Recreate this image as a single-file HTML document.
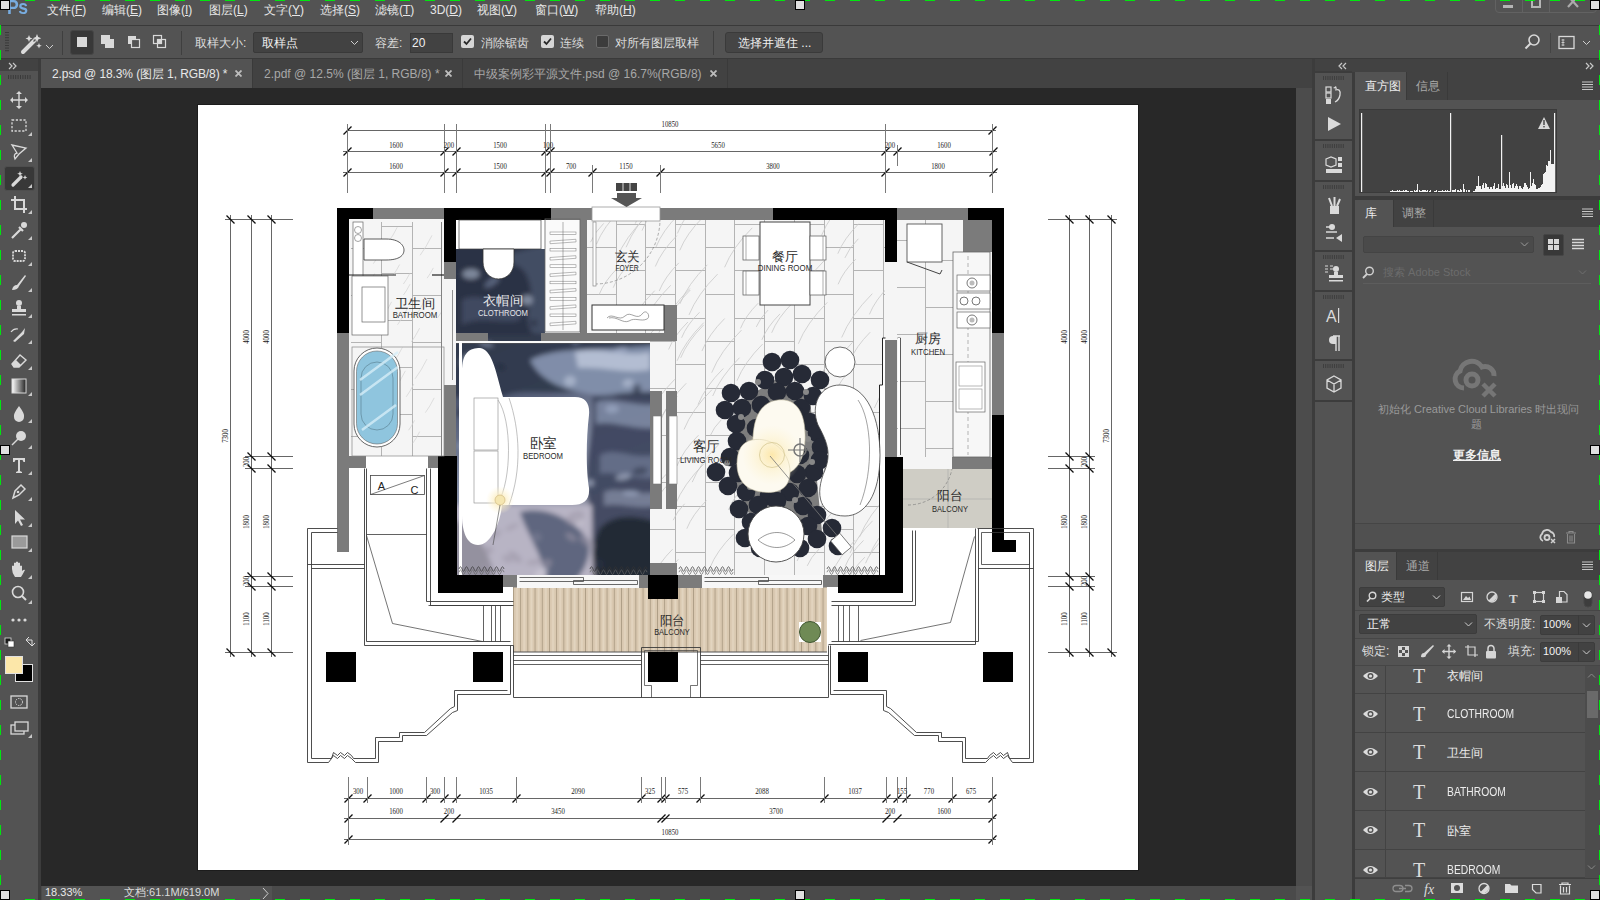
<!DOCTYPE html>
<html><head><meta charset="utf-8">
<style>
*{box-sizing:border-box;margin:0;padding:0}
html,body{width:1600px;height:900px;overflow:hidden;background:#535353;font-family:"Liberation Sans",sans-serif;color:#e8e8e8;font-size:12px}
.a{position:absolute}
.t{position:absolute;white-space:nowrap;line-height:1}
.menu .t{top:4px;font-size:12px;color:#e6e6e6}
.ti{fill:#dcdcdc}
</style></head><body>
<!-- menu bar -->
<div class="a" style="left:0;top:0;width:1600px;height:25px;background:#535353"></div>
<div class="a" style="left:0;top:25px;width:1600px;height:1px;background:#3a3a3a"></div>
<div class="t" style="left:7px;top:-4px;font-size:21px;font-weight:bold;color:#78acdf;letter-spacing:-0.5px;transform:scaleX(0.84);transform-origin:0 0">Ps</div>
<div class="menu">
<div class="t" style="left:47px">文件(<u>F</u>)</div>
<div class="t" style="left:102px">编辑(<u>E</u>)</div>
<div class="t" style="left:157px">图像(<u>I</u>)</div>
<div class="t" style="left:209px">图层(<u>L</u>)</div>
<div class="t" style="left:264px">文字(<u>Y</u>)</div>
<div class="t" style="left:320px">选择(<u>S</u>)</div>
<div class="t" style="left:375px">滤镜(<u>T</u>)</div>
<div class="t" style="left:430px">3D(<u>D</u>)</div>
<div class="t" style="left:477px">视图(<u>V</u>)</div>
<div class="t" style="left:535px">窗口(<u>W</u>)</div>
<div class="t" style="left:595px">帮助(<u>H</u>)</div>
</div>
<!-- window controls -->
<div class="a" style="left:1495px;top:-6px;width:102px;height:19px;border:1px solid #626262;border-radius:4px"></div>
<div class="a" style="left:1522px;top:0;width:1px;height:12px;background:#626262"></div>
<div class="a" style="left:1549px;top:0;width:1px;height:12px;background:#626262"></div>
<div class="a" style="left:1503px;top:5px;width:10px;height:3px;background:#b5b5b5"></div>
<div class="a" style="left:1531px;top:-3px;width:10px;height:11px;border:2px solid #b5b5b5"></div>
<svg class="a" style="left:1567px;top:-4px" width="12" height="12"><path d="M1,0 L11,11 M11,0 L1,11" stroke="#aaaaaa" stroke-width="2.2"/></svg>

<!-- options bar -->
<div class="a" style="left:0;top:58px;width:1600px;height:1px;background:#3a3a3a"></div>


<!-- left toolbar -->
<div class="a" style="left:0;top:59px;width:38px;height:841px;background:#535353"></div>
<div class="a" style="left:0;top:59px;width:38px;height:12px;background:#424242"></div>
<div class="a" style="left:38px;top:59px;width:3px;height:841px;background:#3c3c3c"></div>

<!-- tab bar -->
<div class="a" style="left:41px;top:59px;width:1271px;height:29px;background:#424242"></div>
<div class="a" style="left:41px;top:59px;width:211px;height:29px;background:#535353"></div>
<div class="a" style="left:252px;top:59px;width:1px;height:29px;background:#3a3a3a"></div>
<div class="a" style="left:462px;top:59px;width:1px;height:29px;background:#3a3a3a"></div>
<div class="a" style="left:727px;top:59px;width:1px;height:29px;background:#3a3a3a"></div>
<div class="t" style="left:52px;top:68px;font-size:12px;color:#e8e8e8;letter-spacing:-0.1px">2.psd @ 18.3% (图层 1, RGB/8) *</div>
<svg class="a" style="left:235px;top:70px" width="7" height="7"><path d="M0.5,0.5 L6.5,6.5 M6.5,0.5 L0.5,6.5" stroke="#bdbdbd" stroke-width="1.8"/></svg>
<div class="t" style="left:264px;top:68px;font-size:12px;color:#a8a8a8">2.pdf @ 12.5% (图层 1, RGB/8) *</div>
<svg class="a" style="left:445px;top:70px" width="7" height="7"><path d="M0.5,0.5 L6.5,6.5 M6.5,0.5 L0.5,6.5" stroke="#bdbdbd" stroke-width="1.8"/></svg>
<div class="t" style="left:474px;top:68px;font-size:12px;color:#a8a8a8">中级案例彩平源文件.psd @ 16.7%(RGB/8)</div>
<svg class="a" style="left:710px;top:70px" width="7" height="7"><path d="M0.5,0.5 L6.5,6.5 M6.5,0.5 L0.5,6.5" stroke="#bdbdbd" stroke-width="1.8"/></svg>

<!-- canvas bg -->
<div class="a" style="left:41px;top:88px;width:1255px;height:798px;background:#282828"></div>
<!-- vertical scrollbar -->
<div class="a" style="left:1296px;top:88px;width:16px;height:798px;background:#4c4c4c"></div>
<div class="a" style="left:1312px;top:59px;width:3px;height:841px;background:#3c3c3c"></div>
<!-- status bar -->
<div class="a" style="left:41px;top:886px;width:1255px;height:14px;background:#4a4a4a"></div>
<div class="a" style="left:1296px;top:886px;width:16px;height:14px;background:#535353"></div>
<div class="a" style="left:42px;top:886px;width:47px;height:14px;background:#535353"></div>
<div class="a" style="left:89px;top:886px;width:183px;height:14px;background:#535353"></div>
<div class="t" style="left:45px;top:887px;font-size:11px;color:#e8e8e8">18.33%</div>
<div class="t" style="left:124px;top:887px;font-size:11px;color:#dcdcdc">文档:61.1M/619.0M</div>
<svg class="a" style="left:262px;top:887px" width="8" height="13"><path d="M1 1 L6 6.5 L1 12" stroke="#cfcfcf" fill="none" stroke-width="1"/></svg>

<!-- document -->
<div class="a" style="left:197px;top:104px;width:942px;height:767px;background:#1c1c1c"></div>
<div class="a" style="left:198px;top:105px;width:940px;height:765px;background:#fff"></div>
<svg class="a" style="left:198px;top:105px" width="940" height="765" viewBox="198 105 940 765" font-family="Liberation Sans, sans-serif">
<defs>
<pattern id="wood" x="513" y="0" width="7.2" height="20" patternUnits="userSpaceOnUse">
<rect width="7.2" height="20" fill="#d9c8b0"/><rect x="0" width="0.8" height="20" fill="#a89880"/><rect x="3" width="2" height="20" fill="#e3d5c0"/></pattern>
<linearGradient id="cg" x1="0" y1="0" x2="0.3" y2="1">
<stop offset="0" stop-color="#2e3446"/><stop offset="0.35" stop-color="#59627c"/><stop offset="0.6" stop-color="#8891a8"/><stop offset="1" stop-color="#9e9aa8"/></linearGradient>
<radialGradient id="lamp" cx="0.5" cy="0.5" r="0.5"><stop offset="0" stop-color="#fde39a" stop-opacity="0.95"/><stop offset="0.5" stop-color="#fcefc4" stop-opacity="0.6"/><stop offset="1" stop-color="#fff4d0" stop-opacity="0"/></radialGradient>
<radialGradient id="ctab" cx="0.45" cy="0.7" r="0.7"><stop offset="0" stop-color="#fbe9b5"/><stop offset="1" stop-color="#fdfaf0"/></radialGradient>
<clipPath id="lclip"><rect x="587" y="220" width="298" height="355"/><rect x="349" y="220" width="95" height="236"/></clipPath>
<clipPath id="cclip"><rect x="456" y="249" width="89" height="84"/><rect x="456" y="333" width="194" height="242"/></clipPath>
<filter id="cblur" x="-5%" y="-5%" width="110%" height="110%"><feGaussianBlur stdDeviation="2.8"/></filter>
</defs>
<rect x="349" y="219" width="95" height="237" fill="#f5f5f5" />
<rect x="587" y="219" width="299" height="356" fill="#f5f5f5" />
<rect x="650" y="341" width="27" height="234" fill="#f5f5f5" />
<rect x="897" y="219" width="95" height="238" fill="#f5f5f5" />
<rect x="953" y="252" width="39" height="205" fill="#f7f7f7" />
<rect x="885" y="262" width="12" height="78" fill="#f5f5f5" />
<rect x="545" y="219" width="35" height="113" fill="#fafafa" />
<rect x="586" y="247" width="30" height="1" fill="#b4b4b4"/>
<rect x="586" y="294" width="30" height="1" fill="#b4b4b4"/>
<rect x="586" y="341" width="30" height="1" fill="#b4b4b4"/>
<rect x="586" y="388" width="30" height="1" fill="#b4b4b4"/>
<rect x="586" y="435" width="30" height="1" fill="#b4b4b4"/>
<rect x="586" y="482" width="30" height="1" fill="#b4b4b4"/>
<rect x="586" y="529" width="30" height="1" fill="#b4b4b4"/>
<rect x="616" y="220" width="1" height="355" fill="#b4b4b4"/>
<rect x="616" y="224" width="29" height="1" fill="#b4b4b4"/>
<rect x="616" y="270" width="29" height="1" fill="#b4b4b4"/>
<rect x="616" y="318" width="29" height="1" fill="#b4b4b4"/>
<rect x="616" y="364" width="29" height="1" fill="#b4b4b4"/>
<rect x="616" y="412" width="29" height="1" fill="#b4b4b4"/>
<rect x="616" y="458" width="29" height="1" fill="#b4b4b4"/>
<rect x="616" y="506" width="29" height="1" fill="#b4b4b4"/>
<rect x="616" y="552" width="29" height="1" fill="#b4b4b4"/>
<rect x="645" y="220" width="1" height="355" fill="#b4b4b4"/>
<rect x="645" y="247" width="30" height="1" fill="#b4b4b4"/>
<rect x="645" y="294" width="30" height="1" fill="#b4b4b4"/>
<rect x="645" y="341" width="30" height="1" fill="#b4b4b4"/>
<rect x="645" y="388" width="30" height="1" fill="#b4b4b4"/>
<rect x="645" y="435" width="30" height="1" fill="#b4b4b4"/>
<rect x="645" y="482" width="30" height="1" fill="#b4b4b4"/>
<rect x="645" y="529" width="30" height="1" fill="#b4b4b4"/>
<rect x="675" y="220" width="1" height="355" fill="#b4b4b4"/>
<rect x="675" y="224" width="30" height="1" fill="#b4b4b4"/>
<rect x="675" y="270" width="30" height="1" fill="#b4b4b4"/>
<rect x="675" y="318" width="30" height="1" fill="#b4b4b4"/>
<rect x="675" y="364" width="30" height="1" fill="#b4b4b4"/>
<rect x="675" y="412" width="30" height="1" fill="#b4b4b4"/>
<rect x="675" y="458" width="30" height="1" fill="#b4b4b4"/>
<rect x="675" y="506" width="30" height="1" fill="#b4b4b4"/>
<rect x="675" y="552" width="30" height="1" fill="#b4b4b4"/>
<rect x="705" y="220" width="1" height="355" fill="#b4b4b4"/>
<rect x="705" y="247" width="29" height="1" fill="#b4b4b4"/>
<rect x="705" y="294" width="29" height="1" fill="#b4b4b4"/>
<rect x="705" y="341" width="29" height="1" fill="#b4b4b4"/>
<rect x="705" y="388" width="29" height="1" fill="#b4b4b4"/>
<rect x="705" y="435" width="29" height="1" fill="#b4b4b4"/>
<rect x="705" y="482" width="29" height="1" fill="#b4b4b4"/>
<rect x="705" y="529" width="29" height="1" fill="#b4b4b4"/>
<rect x="734" y="220" width="1" height="355" fill="#b4b4b4"/>
<rect x="734" y="224" width="30" height="1" fill="#b4b4b4"/>
<rect x="734" y="270" width="30" height="1" fill="#b4b4b4"/>
<rect x="734" y="318" width="30" height="1" fill="#b4b4b4"/>
<rect x="734" y="364" width="30" height="1" fill="#b4b4b4"/>
<rect x="734" y="412" width="30" height="1" fill="#b4b4b4"/>
<rect x="734" y="458" width="30" height="1" fill="#b4b4b4"/>
<rect x="734" y="506" width="30" height="1" fill="#b4b4b4"/>
<rect x="734" y="552" width="30" height="1" fill="#b4b4b4"/>
<rect x="764" y="220" width="1" height="355" fill="#b4b4b4"/>
<rect x="764" y="247" width="30" height="1" fill="#b4b4b4"/>
<rect x="764" y="294" width="30" height="1" fill="#b4b4b4"/>
<rect x="764" y="341" width="30" height="1" fill="#b4b4b4"/>
<rect x="764" y="388" width="30" height="1" fill="#b4b4b4"/>
<rect x="764" y="435" width="30" height="1" fill="#b4b4b4"/>
<rect x="764" y="482" width="30" height="1" fill="#b4b4b4"/>
<rect x="764" y="529" width="30" height="1" fill="#b4b4b4"/>
<rect x="794" y="220" width="1" height="355" fill="#b4b4b4"/>
<rect x="794" y="224" width="30" height="1" fill="#b4b4b4"/>
<rect x="794" y="270" width="30" height="1" fill="#b4b4b4"/>
<rect x="794" y="318" width="30" height="1" fill="#b4b4b4"/>
<rect x="794" y="364" width="30" height="1" fill="#b4b4b4"/>
<rect x="794" y="412" width="30" height="1" fill="#b4b4b4"/>
<rect x="794" y="458" width="30" height="1" fill="#b4b4b4"/>
<rect x="794" y="506" width="30" height="1" fill="#b4b4b4"/>
<rect x="794" y="552" width="30" height="1" fill="#b4b4b4"/>
<rect x="824" y="220" width="1" height="355" fill="#b4b4b4"/>
<rect x="824" y="247" width="29" height="1" fill="#b4b4b4"/>
<rect x="824" y="294" width="29" height="1" fill="#b4b4b4"/>
<rect x="824" y="341" width="29" height="1" fill="#b4b4b4"/>
<rect x="824" y="388" width="29" height="1" fill="#b4b4b4"/>
<rect x="824" y="435" width="29" height="1" fill="#b4b4b4"/>
<rect x="824" y="482" width="29" height="1" fill="#b4b4b4"/>
<rect x="824" y="529" width="29" height="1" fill="#b4b4b4"/>
<rect x="853" y="220" width="1" height="355" fill="#b4b4b4"/>
<rect x="853" y="224" width="30" height="1" fill="#b4b4b4"/>
<rect x="853" y="270" width="30" height="1" fill="#b4b4b4"/>
<rect x="853" y="318" width="30" height="1" fill="#b4b4b4"/>
<rect x="853" y="364" width="30" height="1" fill="#b4b4b4"/>
<rect x="853" y="412" width="30" height="1" fill="#b4b4b4"/>
<rect x="853" y="458" width="30" height="1" fill="#b4b4b4"/>
<rect x="853" y="506" width="30" height="1" fill="#b4b4b4"/>
<rect x="853" y="552" width="30" height="1" fill="#b4b4b4"/>
<rect x="883" y="220" width="1" height="355" fill="#b4b4b4"/>
<rect x="883" y="247" width="2" height="1" fill="#b4b4b4"/>
<rect x="883" y="294" width="2" height="1" fill="#b4b4b4"/>
<rect x="883" y="341" width="2" height="1" fill="#b4b4b4"/>
<rect x="883" y="388" width="2" height="1" fill="#b4b4b4"/>
<rect x="883" y="435" width="2" height="1" fill="#b4b4b4"/>
<rect x="883" y="482" width="2" height="1" fill="#b4b4b4"/>
<rect x="883" y="529" width="2" height="1" fill="#b4b4b4"/>
<rect x="351" y="248" width="30" height="1" fill="#b4b4b4"/>
<rect x="351" y="295" width="30" height="1" fill="#b4b4b4"/>
<rect x="351" y="342" width="30" height="1" fill="#b4b4b4"/>
<rect x="351" y="389" width="30" height="1" fill="#b4b4b4"/>
<rect x="351" y="436" width="30" height="1" fill="#b4b4b4"/>
<rect x="381" y="222" width="1" height="234" fill="#b4b4b4"/>
<rect x="381" y="226" width="31" height="1" fill="#b4b4b4"/>
<rect x="381" y="273" width="31" height="1" fill="#b4b4b4"/>
<rect x="381" y="320" width="31" height="1" fill="#b4b4b4"/>
<rect x="381" y="367" width="31" height="1" fill="#b4b4b4"/>
<rect x="381" y="414" width="31" height="1" fill="#b4b4b4"/>
<rect x="412" y="222" width="1" height="234" fill="#b4b4b4"/>
<rect x="412" y="248" width="29" height="1" fill="#b4b4b4"/>
<rect x="412" y="295" width="29" height="1" fill="#b4b4b4"/>
<rect x="412" y="342" width="29" height="1" fill="#b4b4b4"/>
<rect x="412" y="389" width="29" height="1" fill="#b4b4b4"/>
<rect x="412" y="436" width="29" height="1" fill="#b4b4b4"/>
<rect x="897" y="240" width="28" height="1" fill="#b4b4b4"/>
<rect x="897" y="287" width="28" height="1" fill="#b4b4b4"/>
<rect x="897" y="334" width="28" height="1" fill="#b4b4b4"/>
<rect x="897" y="381" width="28" height="1" fill="#b4b4b4"/>
<rect x="897" y="428" width="28" height="1" fill="#b4b4b4"/>
<rect x="925" y="220" width="1" height="237" fill="#b4b4b4"/>
<rect x="925" y="260" width="28" height="1" fill="#b4b4b4"/>
<rect x="925" y="307" width="28" height="1" fill="#b4b4b4"/>
<rect x="925" y="354" width="28" height="1" fill="#b4b4b4"/>
<rect x="925" y="401" width="28" height="1" fill="#b4b4b4"/>
<rect x="925" y="448" width="28" height="1" fill="#b4b4b4"/>
<rect x="953" y="240" width="0" height="1" fill="#b4b4b4"/>
<rect x="953" y="287" width="0" height="1" fill="#b4b4b4"/>
<rect x="953" y="334" width="0" height="1" fill="#b4b4b4"/>
<rect x="953" y="381" width="0" height="1" fill="#b4b4b4"/>
<rect x="953" y="428" width="0" height="1" fill="#b4b4b4"/>
<g clip-path="url(#lclip)">
<path d="M659.0,422.3 q5.2,-13.0 18.3,-26.1" stroke="#c9c9c9" stroke-width="0.8" fill="none"/>
<path d="M765.1,452.3 q3.4,-8.5 11.9,-17.0" stroke="#c9c9c9" stroke-width="0.8" fill="none"/>
<path d="M593.8,530.2 q4.6,-11.4 15.9,-22.8" stroke="#c9c9c9" stroke-width="0.8" fill="none"/>
<path d="M658.0,588.4 q5.8,-14.6 20.4,-29.1" stroke="#c9c9c9" stroke-width="0.8" fill="none"/>
<path d="M832.6,397.3 q6.8,-17.1 23.9,-34.2" stroke="#c9c9c9" stroke-width="0.8" fill="none"/>
<path d="M633.7,455.6 q8.2,-20.5 28.7,-41.0" stroke="#c9c9c9" stroke-width="0.8" fill="none"/>
<path d="M741.7,494.8 q7.0,-17.6 24.6,-35.1" stroke="#c9c9c9" stroke-width="0.8" fill="none"/>
<path d="M608.6,501.0 q6.5,-16.4 22.9,-32.7" stroke="#c9c9c9" stroke-width="0.8" fill="none"/>
<path d="M677.4,233.4 q8.2,-20.5 28.7,-41.0" stroke="#c9c9c9" stroke-width="0.8" fill="none"/>
<path d="M727.1,486.5 q8.3,-20.7 29.0,-41.4" stroke="#c9c9c9" stroke-width="0.8" fill="none"/>
<path d="M797.1,561.0 q5.4,-13.4 18.8,-26.8" stroke="#c9c9c9" stroke-width="0.8" fill="none"/>
<path d="M822.3,385.6 q8.6,-21.5 30.1,-43.1" stroke="#c9c9c9" stroke-width="0.8" fill="none"/>
<path d="M844.9,257.9 q3.8,-9.5 13.4,-19.1" stroke="#c9c9c9" stroke-width="0.8" fill="none"/>
<path d="M652.9,577.3 q5.6,-14.0 19.7,-28.1" stroke="#c9c9c9" stroke-width="0.8" fill="none"/>
<path d="M771.7,332.8 q6.0,-15.1 21.2,-30.2" stroke="#c9c9c9" stroke-width="0.8" fill="none"/>
<path d="M701.9,351.1 q6.5,-16.3 22.8,-32.6" stroke="#c9c9c9" stroke-width="0.8" fill="none"/>
<path d="M759.4,554.7 q7.1,-17.7 24.8,-35.5" stroke="#c9c9c9" stroke-width="0.8" fill="none"/>
<path d="M859.4,537.2 q8.9,-22.4 31.3,-44.7" stroke="#c9c9c9" stroke-width="0.8" fill="none"/>
<path d="M784.7,282.0 q8.2,-20.4 28.6,-40.8" stroke="#c9c9c9" stroke-width="0.8" fill="none"/>
<path d="M869.7,554.9 q6.4,-16.0 22.5,-32.1" stroke="#c9c9c9" stroke-width="0.8" fill="none"/>
<path d="M797.0,299.7 q8.0,-20.0 28.0,-39.9" stroke="#c9c9c9" stroke-width="0.8" fill="none"/>
<path d="M756.3,326.9 q3.4,-8.5 11.8,-16.9" stroke="#c9c9c9" stroke-width="0.8" fill="none"/>
<path d="M837.6,586.2 q3.5,-8.8 12.4,-17.7" stroke="#c9c9c9" stroke-width="0.8" fill="none"/>
<path d="M822.2,373.0 q3.9,-9.8 13.7,-19.5" stroke="#c9c9c9" stroke-width="0.8" fill="none"/>
<path d="M675.2,504.9 q8.2,-20.6 28.8,-41.2" stroke="#c9c9c9" stroke-width="0.8" fill="none"/>
<path d="M602.8,448.1 q3.3,-8.2 11.4,-16.3" stroke="#c9c9c9" stroke-width="0.8" fill="none"/>
<path d="M798.3,343.8 q8.3,-20.7 29.0,-41.4" stroke="#c9c9c9" stroke-width="0.8" fill="none"/>
<path d="M874.4,408.0 q9.0,-22.5 31.5,-45.0" stroke="#c9c9c9" stroke-width="0.8" fill="none"/>
<path d="M679.8,250.3 q6.6,-16.5 23.1,-33.0" stroke="#c9c9c9" stroke-width="0.8" fill="none"/>
<path d="M599.1,294.6 q5.4,-13.6 19.1,-27.2" stroke="#c9c9c9" stroke-width="0.8" fill="none"/>
<path d="M767.0,279.5 q3.3,-8.1 11.4,-16.3" stroke="#c9c9c9" stroke-width="0.8" fill="none"/>
<path d="M841.7,337.5 q8.8,-21.9 30.6,-43.8" stroke="#c9c9c9" stroke-width="0.8" fill="none"/>
<path d="M850.0,361.0 q5.8,-14.4 20.2,-28.8" stroke="#c9c9c9" stroke-width="0.8" fill="none"/>
<path d="M740.8,459.0 q6.6,-16.4 23.0,-32.9" stroke="#c9c9c9" stroke-width="0.8" fill="none"/>
<path d="M752.2,450.2 q8.6,-21.6 30.3,-43.2" stroke="#c9c9c9" stroke-width="0.8" fill="none"/>
<path d="M737.0,380.7 q7.3,-18.3 25.6,-36.6" stroke="#c9c9c9" stroke-width="0.8" fill="none"/>
<path d="M658.9,332.8 q8.9,-22.2 31.0,-44.3" stroke="#c9c9c9" stroke-width="0.8" fill="none"/>
<path d="M741.1,423.8 q3.1,-7.7 10.7,-15.3" stroke="#c9c9c9" stroke-width="0.8" fill="none"/>
<path d="M710.4,435.4 q3.1,-7.8 10.9,-15.6" stroke="#c9c9c9" stroke-width="0.8" fill="none"/>
<path d="M768.6,454.6 q3.4,-8.4 11.8,-16.8" stroke="#c9c9c9" stroke-width="0.8" fill="none"/>
<path d="M771.9,393.6 q7.1,-17.7 24.8,-35.4" stroke="#c9c9c9" stroke-width="0.8" fill="none"/>
<path d="M692.2,482.2 q7.4,-18.6 26.0,-37.1" stroke="#c9c9c9" stroke-width="0.8" fill="none"/>
<path d="M596.4,244.3 q7.1,-17.6 24.7,-35.3" stroke="#c9c9c9" stroke-width="0.8" fill="none"/>
<path d="M869.4,314.4 q5.7,-14.3 20.1,-28.7" stroke="#c9c9c9" stroke-width="0.8" fill="none"/>
<path d="M761.9,339.8 q5.2,-13.0 18.1,-25.9" stroke="#c9c9c9" stroke-width="0.8" fill="none"/>
<path d="M680.7,357.8 q6.6,-16.4 23.0,-32.9" stroke="#c9c9c9" stroke-width="0.8" fill="none"/>
<path d="M677.1,360.8 q7.6,-19.1 26.7,-38.2" stroke="#c9c9c9" stroke-width="0.8" fill="none"/>
<path d="M597.8,431.5 q7.4,-18.5 25.9,-37.1" stroke="#c9c9c9" stroke-width="0.8" fill="none"/>
<path d="M679.9,303.9 q7.8,-19.6 27.4,-39.1" stroke="#c9c9c9" stroke-width="0.8" fill="none"/>
<path d="M659.2,291.0 q5.6,-14.0 19.6,-28.1" stroke="#c9c9c9" stroke-width="0.8" fill="none"/>
<path d="M792.4,259.5 q4.9,-12.3 17.3,-24.7" stroke="#c9c9c9" stroke-width="0.8" fill="none"/>
<path d="M686.8,528.7 q5.6,-14.1 19.7,-28.2" stroke="#c9c9c9" stroke-width="0.8" fill="none"/>
<path d="M838.1,284.3 q5.0,-12.6 17.6,-25.1" stroke="#c9c9c9" stroke-width="0.8" fill="none"/>
<path d="M778.6,547.6 q5.7,-14.3 20.0,-28.5" stroke="#c9c9c9" stroke-width="0.8" fill="none"/>
<path d="M655.3,266.5 q6.2,-15.4 21.6,-30.9" stroke="#c9c9c9" stroke-width="0.8" fill="none"/>
<path d="M645.3,518.9 q8.0,-20.1 28.1,-40.2" stroke="#c9c9c9" stroke-width="0.8" fill="none"/>
<path d="M643.2,324.5 q7.8,-19.6 27.5,-39.2" stroke="#c9c9c9" stroke-width="0.8" fill="none"/>
<path d="M776.2,518.7 q5.1,-12.7 17.8,-25.4" stroke="#c9c9c9" stroke-width="0.8" fill="none"/>
<path d="M627.6,329.4 q7.8,-19.4 27.2,-38.8" stroke="#c9c9c9" stroke-width="0.8" fill="none"/>
<path d="M668.6,349.5 q5.5,-13.8 19.3,-27.5" stroke="#c9c9c9" stroke-width="0.8" fill="none"/>
<path d="M711.7,372.7 q8.5,-21.3 29.8,-42.6" stroke="#c9c9c9" stroke-width="0.8" fill="none"/>
<path d="M635.2,223.7 q8.7,-21.6 30.3,-43.3" stroke="#c9c9c9" stroke-width="0.8" fill="none"/>
<path d="M845.2,585.2 q5.6,-14.0 19.6,-28.0" stroke="#c9c9c9" stroke-width="0.8" fill="none"/>
<path d="M865.5,563.3 q4.3,-10.8 15.2,-21.7" stroke="#c9c9c9" stroke-width="0.8" fill="none"/>
<path d="M806.2,529.9 q7.0,-17.4 24.4,-34.9" stroke="#c9c9c9" stroke-width="0.8" fill="none"/>
<path d="M740.5,328.4 q5.0,-12.6 17.7,-25.2" stroke="#c9c9c9" stroke-width="0.8" fill="none"/>
<path d="M656.0,247.0 q6.5,-16.3 22.9,-32.7" stroke="#c9c9c9" stroke-width="0.8" fill="none"/>
<path d="M673.2,520.2 q3.3,-8.2 11.4,-16.4" stroke="#c9c9c9" stroke-width="0.8" fill="none"/>
<path d="M852.0,477.3 q8.5,-21.4 29.9,-42.7" stroke="#c9c9c9" stroke-width="0.8" fill="none"/>
<path d="M850.0,553.1 q6.5,-16.2 22.6,-32.3" stroke="#c9c9c9" stroke-width="0.8" fill="none"/>
<path d="M593.8,496.3 q4.0,-10.1 14.1,-20.2" stroke="#c9c9c9" stroke-width="0.8" fill="none"/>
<path d="M677.0,465.9 q6.1,-15.4 21.5,-30.7" stroke="#c9c9c9" stroke-width="0.8" fill="none"/>
<path d="M710.0,567.6 q6.7,-16.7 23.4,-33.4" stroke="#c9c9c9" stroke-width="0.8" fill="none"/>
<path d="M689.0,314.9 q8.2,-20.4 28.6,-40.8" stroke="#c9c9c9" stroke-width="0.8" fill="none"/>
<path d="M728.4,509.9 q5.1,-12.8 17.9,-25.6" stroke="#c9c9c9" stroke-width="0.8" fill="none"/>
<path d="M647.2,418.7 q7.9,-19.8 27.7,-39.5" stroke="#c9c9c9" stroke-width="0.8" fill="none"/>
<path d="M639.7,513.3 q8.5,-21.3 29.9,-42.7" stroke="#c9c9c9" stroke-width="0.8" fill="none"/>
<path d="M823.8,525.0 q3.0,-7.6 10.7,-15.2" stroke="#c9c9c9" stroke-width="0.8" fill="none"/>
<path d="M772.3,539.4 q3.3,-8.2 11.5,-16.5" stroke="#c9c9c9" stroke-width="0.8" fill="none"/>
<path d="M668.7,320.8 q6.2,-15.4 21.6,-30.8" stroke="#c9c9c9" stroke-width="0.8" fill="none"/>
<path d="M712.7,396.0 q7.7,-19.1 26.8,-38.3" stroke="#c9c9c9" stroke-width="0.8" fill="none"/>
<path d="M590.5,242.2 q3.8,-9.4 13.2,-18.8" stroke="#c9c9c9" stroke-width="0.8" fill="none"/>
<path d="M626.1,247.2 q8.8,-22.1 31.0,-44.2" stroke="#c9c9c9" stroke-width="0.8" fill="none"/>
<path d="M837.8,253.7 q6.0,-15.0 21.0,-30.1" stroke="#c9c9c9" stroke-width="0.8" fill="none"/>
<path d="M681.6,337.8 q5.1,-12.8 17.9,-25.5" stroke="#c9c9c9" stroke-width="0.8" fill="none"/>
<path d="M777.6,437.9 q5.2,-12.9 18.1,-25.8" stroke="#c9c9c9" stroke-width="0.8" fill="none"/>
<path d="M645.4,343.0 q3.7,-9.4 13.1,-18.7" stroke="#c9c9c9" stroke-width="0.8" fill="none"/>
<path d="M751.1,485.5 q5.3,-13.2 18.5,-26.4" stroke="#c9c9c9" stroke-width="0.8" fill="none"/>
<path d="M613.2,287.7 q5.2,-13.1 18.3,-26.2" stroke="#c9c9c9" stroke-width="0.8" fill="none"/>
<path d="M765.3,510.0 q5.3,-13.2 18.5,-26.4" stroke="#c9c9c9" stroke-width="0.8" fill="none"/>
<path d="M822.3,451.2 q5.6,-14.0 19.6,-27.9" stroke="#c9c9c9" stroke-width="0.8" fill="none"/>
<path d="M698.0,404.6 q7.2,-18.0 25.3,-36.1" stroke="#c9c9c9" stroke-width="0.8" fill="none"/>
<path d="M711.9,477.4 q5.8,-14.4 20.2,-28.8" stroke="#c9c9c9" stroke-width="0.8" fill="none"/>
<path d="M661.1,419.2 q7.2,-17.9 25.1,-35.9" stroke="#c9c9c9" stroke-width="0.8" fill="none"/>
<path d="M610.8,378.4 q5.6,-13.9 19.4,-27.8" stroke="#c9c9c9" stroke-width="0.8" fill="none"/>
<path d="M845.1,566.6 q5.2,-13.1 18.4,-26.2" stroke="#c9c9c9" stroke-width="0.8" fill="none"/>
<path d="M850.4,513.1 q4.6,-11.4 16.0,-22.9" stroke="#c9c9c9" stroke-width="0.8" fill="none"/>
<path d="M724.6,267.3 q7.9,-19.7 27.6,-39.4" stroke="#c9c9c9" stroke-width="0.8" fill="none"/>
<path d="M782.1,548.5 q7.8,-19.4 27.1,-38.8" stroke="#c9c9c9" stroke-width="0.8" fill="none"/>
<path d="M783.6,492.0 q6.4,-16.0 22.3,-31.9" stroke="#c9c9c9" stroke-width="0.8" fill="none"/>
<path d="M619.9,438.3 q3.0,-7.6 10.6,-15.1" stroke="#c9c9c9" stroke-width="0.8" fill="none"/>
<path d="M631.6,506.9 q3.3,-8.2 11.4,-16.3" stroke="#c9c9c9" stroke-width="0.8" fill="none"/>
<path d="M616.6,258.5 q8.3,-20.7 29.0,-41.4" stroke="#c9c9c9" stroke-width="0.8" fill="none"/>
<path d="M642.0,230.6 q8.0,-20.1 28.2,-40.2" stroke="#c9c9c9" stroke-width="0.8" fill="none"/>
<path d="M625.2,532.6 q7.0,-17.6 24.6,-35.2" stroke="#c9c9c9" stroke-width="0.8" fill="none"/>
<path d="M832.5,572.5 q6.5,-16.2 22.7,-32.4" stroke="#c9c9c9" stroke-width="0.8" fill="none"/>
<path d="M821.6,235.3 q7.6,-19.0 26.6,-38.0" stroke="#c9c9c9" stroke-width="0.8" fill="none"/>
<path d="M738.3,485.2 q3.6,-9.1 12.7,-18.2" stroke="#c9c9c9" stroke-width="0.8" fill="none"/>
<path d="M807.2,565.9 q3.4,-8.4 11.8,-16.8" stroke="#c9c9c9" stroke-width="0.8" fill="none"/>
<path d="M684.0,429.5 q8.0,-19.9 27.9,-39.8" stroke="#c9c9c9" stroke-width="0.8" fill="none"/>
<path d="M373.3,263.7 q3.3,-4.4 6.6,-11.0" stroke="#d2d2d2" stroke-width="0.7" fill="none"/>
<path d="M406.2,396.8 q3.8,-5.1 7.6,-12.7" stroke="#d2d2d2" stroke-width="0.7" fill="none"/>
<path d="M384.3,314.0 q3.7,-4.9 7.3,-12.2" stroke="#d2d2d2" stroke-width="0.7" fill="none"/>
<path d="M388.8,241.3 q4.2,-5.6 8.4,-14.0" stroke="#d2d2d2" stroke-width="0.7" fill="none"/>
<path d="M437.6,317.8 q5.1,-6.8 10.2,-17.0" stroke="#d2d2d2" stroke-width="0.7" fill="none"/>
<path d="M366.1,382.3 q5.1,-6.8 10.2,-17.1" stroke="#d2d2d2" stroke-width="0.7" fill="none"/>
<path d="M411.3,342.0 q4.1,-5.5 8.3,-13.8" stroke="#d2d2d2" stroke-width="0.7" fill="none"/>
<path d="M408.6,430.2 q2.9,-3.9 5.9,-9.8" stroke="#d2d2d2" stroke-width="0.7" fill="none"/>
<path d="M360.4,395.6 q5.7,-7.6 11.4,-19.0" stroke="#d2d2d2" stroke-width="0.7" fill="none"/>
<path d="M397.5,324.8 q5.0,-6.7 10.0,-16.6" stroke="#d2d2d2" stroke-width="0.7" fill="none"/>
<path d="M368.4,284.0 q3.1,-4.2 6.2,-10.4" stroke="#d2d2d2" stroke-width="0.7" fill="none"/>
<path d="M403.5,295.0 q3.2,-4.3 6.5,-10.8" stroke="#d2d2d2" stroke-width="0.7" fill="none"/>
<path d="M412.8,443.2 q3.5,-4.6 6.9,-11.6" stroke="#d2d2d2" stroke-width="0.7" fill="none"/>
<path d="M414.1,317.9 q5.5,-7.3 10.9,-18.2" stroke="#d2d2d2" stroke-width="0.7" fill="none"/>
<path d="M403.4,284.0 q3.2,-4.2 6.4,-10.6" stroke="#d2d2d2" stroke-width="0.7" fill="none"/>
<path d="M354.0,333.2 q3.8,-5.0 7.6,-12.6" stroke="#d2d2d2" stroke-width="0.7" fill="none"/>
<path d="M367.2,305.6 q3.6,-4.7 7.1,-11.9" stroke="#d2d2d2" stroke-width="0.7" fill="none"/>
<path d="M420.1,255.3 q6.0,-8.0 11.9,-19.9" stroke="#d2d2d2" stroke-width="0.7" fill="none"/>
<path d="M394.2,361.0 q4.1,-5.4 8.2,-13.6" stroke="#d2d2d2" stroke-width="0.7" fill="none"/>
<path d="M425.4,412.6 q4.4,-5.9 8.8,-14.7" stroke="#d2d2d2" stroke-width="0.7" fill="none"/>
<path d="M394.4,389.2 q5.5,-7.3 11.0,-18.3" stroke="#d2d2d2" stroke-width="0.7" fill="none"/>
<path d="M387.2,392.2 q5.9,-7.8 11.7,-19.5" stroke="#d2d2d2" stroke-width="0.7" fill="none"/>
<path d="M393.1,275.3 q3.2,-4.3 6.5,-10.8" stroke="#d2d2d2" stroke-width="0.7" fill="none"/>
<path d="M415.2,378.7 q5.9,-7.8 11.7,-19.5" stroke="#d2d2d2" stroke-width="0.7" fill="none"/>
<path d="M427.1,278.2 q3.1,-4.1 6.2,-10.3" stroke="#d2d2d2" stroke-width="0.7" fill="none"/>
</g>
<g clip-path="url(#cclip)"><g filter="url(#cblur)">
<rect x="450" y="243" width="101" height="97" fill="#2c3345" />
<rect x="450" y="333" width="206" height="248" fill="url(#cg)" />
<path d="M450,243 L551,243 L551,335 L450,335 Z" fill="#2c3345" opacity="1"/>
<path d="M505,255 C515,270 525,262 530,285 C534,300 522,315 532,333 L551,335 L551,243 Z" fill="#4a546c" opacity="0.8"/>
<path d="M462,300 C480,290 500,310 520,300 L520,320 C500,325 480,315 462,325 Z" fill="#56627d" opacity="0.5"/>
<path d="M450,335 L656,335 L656,400 C620,398 600,390 570,392 C540,395 520,388 503,397 L450,397 Z" fill="#323a4e" opacity="0.95"/>
<path d="M530,360 C560,345 600,352 656,345 L656,392 C630,390 605,398 580,392 C560,388 540,380 530,360 Z" fill="#8e9cb9" opacity="0.85"/>
<path d="M575,352 C600,346 625,358 650,352 L650,370 C625,374 600,366 578,368 Z" fill="#c9d2e4" opacity="0.7"/>
<path d="M592,396 L656,396 L656,581 L598,581 C586,545 598,520 588,500 C580,470 596,430 592,396 Z" fill="#3f475f" opacity="0.95"/>
<path d="M596,402 C615,396 636,408 656,404 L656,428 C632,430 612,420 596,424 Z" fill="#8f9bb6" opacity="0.7"/>
<path d="M600,455 C615,446 632,460 656,455 L656,478 C630,480 612,470 600,474 Z" fill="#7e8aa6" opacity="0.55"/>
<path d="M604,492 C618,486 636,496 656,492 L656,506 C636,510 618,502 604,506 Z" fill="#a5afc6" opacity="0.5"/>
<path d="M450,505 L592,505 L592,581 L450,581 Z" fill="#b9b5c5" opacity="0.95"/>
<path d="M450,520 C470,520 488,545 496,581 L450,581 Z" fill="#8b8896" opacity="0.8"/>
<path d="M520,512 C545,505 575,520 588,540 C592,555 585,570 575,581 L548,581 C540,550 525,530 520,512 Z" fill="#4f5873" opacity="0.85"/>
<path d="M600,528 C615,512 640,516 656,522 L656,581 L596,581 C592,560 592,542 600,528 Z" fill="#232733" opacity="0.95"/>
<ellipse cx="488" cy="474" rx="7.4" ry="3.9" fill="#202636" opacity="0.55" transform="rotate(39,488,474)"/>
<ellipse cx="548" cy="563" rx="4.3" ry="4.1" fill="#9a96a6" opacity="0.55" transform="rotate(-39,548,563)"/>
<ellipse cx="637" cy="389" rx="4.0" ry="5.0" fill="#202636" opacity="0.55" transform="rotate(16,637,389)"/>
<ellipse cx="541" cy="573" rx="8.4" ry="3.6" fill="#d6d2de" opacity="0.55" transform="rotate(-37,541,573)"/>
<ellipse cx="520" cy="412" rx="3.8" ry="5.8" fill="#7f8cab" opacity="0.55" transform="rotate(-38,520,412)"/>
<ellipse cx="487" cy="487" rx="5.8" ry="2.6" fill="#a9b6d0" opacity="0.55" transform="rotate(-2,487,487)"/>
<ellipse cx="494" cy="469" rx="8.6" ry="4.6" fill="#2c3347" opacity="0.55" transform="rotate(39,494,469)"/>
<ellipse cx="470" cy="432" rx="6.9" ry="3.6" fill="#7f8cab" opacity="0.55" transform="rotate(34,470,432)"/>
<ellipse cx="628" cy="383" rx="5.6" ry="3.8" fill="#c2cde2" opacity="0.55" transform="rotate(-15,628,383)"/>
<ellipse cx="595" cy="569" rx="3.0" ry="2.3" fill="#2c3347" opacity="0.55" transform="rotate(20,595,569)"/>
<ellipse cx="499" cy="448" rx="6.9" ry="4.5" fill="#202636" opacity="0.55" transform="rotate(14,499,448)"/>
<ellipse cx="578" cy="521" rx="5.3" ry="5.0" fill="#d6d2de" opacity="0.55" transform="rotate(-20,578,521)"/>
<ellipse cx="489" cy="550" rx="4.2" ry="3.7" fill="#9a96a6" opacity="0.55" transform="rotate(15,489,550)"/>
<ellipse cx="587" cy="542" rx="9.7" ry="3.6" fill="#9a96a6" opacity="0.55" transform="rotate(37,587,542)"/>
<ellipse cx="571" cy="537" rx="6.4" ry="3.5" fill="#9a96a6" opacity="0.55" transform="rotate(35,571,537)"/>
<ellipse cx="504" cy="433" rx="6.1" ry="3.6" fill="#c2cde2" opacity="0.55" transform="rotate(-35,504,433)"/>
<ellipse cx="512" cy="527" rx="7.6" ry="2.1" fill="#9a96a6" opacity="0.55" transform="rotate(-26,512,527)"/>
<ellipse cx="469" cy="360" rx="9.3" ry="5.9" fill="#c2cde2" opacity="0.55" transform="rotate(-36,469,360)"/>
<ellipse cx="483" cy="461" rx="9.4" ry="3.9" fill="#202636" opacity="0.55" transform="rotate(32,483,461)"/>
<ellipse cx="527" cy="300" rx="5.6" ry="5.1" fill="#c2cde2" opacity="0.55" transform="rotate(6,527,300)"/>
<ellipse cx="621" cy="350" rx="6.7" ry="3.1" fill="#a9b6d0" opacity="0.55" transform="rotate(-9,621,350)"/>
<ellipse cx="480" cy="483" rx="4.9" ry="3.3" fill="#202636" opacity="0.55" transform="rotate(28,480,483)"/>
<ellipse cx="535" cy="562" rx="9.3" ry="2.5" fill="#9a96a6" opacity="0.55" transform="rotate(-8,535,562)"/>
<ellipse cx="492" cy="459" rx="8.5" ry="2.3" fill="#a9b6d0" opacity="0.55" transform="rotate(12,492,459)"/>
<ellipse cx="481" cy="425" rx="5.3" ry="4.0" fill="#202636" opacity="0.55" transform="rotate(10,481,425)"/>
<ellipse cx="491" cy="529" rx="4.4" ry="5.0" fill="#9a96a6" opacity="0.55" transform="rotate(8,491,529)"/>
<ellipse cx="554" cy="492" rx="3.4" ry="5.7" fill="#c2cde2" opacity="0.55" transform="rotate(-3,554,492)"/>
<ellipse cx="468" cy="498" rx="4.2" ry="4.8" fill="#7f8cab" opacity="0.55" transform="rotate(37,468,498)"/>
<ellipse cx="573" cy="492" rx="4.7" ry="2.6" fill="#7f8cab" opacity="0.55" transform="rotate(25,573,492)"/>
<ellipse cx="612" cy="409" rx="7.0" ry="4.2" fill="#a9b6d0" opacity="0.55" transform="rotate(1,612,409)"/>
<ellipse cx="599" cy="564" rx="5.2" ry="4.8" fill="#2c3347" opacity="0.55" transform="rotate(21,599,564)"/>
<ellipse cx="493" cy="450" rx="5.3" ry="2.8" fill="#a9b6d0" opacity="0.55" transform="rotate(-15,493,450)"/>
<ellipse cx="471" cy="274" rx="8.7" ry="5.0" fill="#c2cde2" opacity="0.55" transform="rotate(0,471,274)"/>
<ellipse cx="640" cy="471" rx="7.9" ry="3.9" fill="#2c3347" opacity="0.55" transform="rotate(-9,640,471)"/>
<ellipse cx="534" cy="323" rx="3.3" ry="3.7" fill="#202636" opacity="0.55" transform="rotate(-18,534,323)"/>
<ellipse cx="570" cy="381" rx="6.0" ry="5.2" fill="#c2cde2" opacity="0.55" transform="rotate(-9,570,381)"/>
<ellipse cx="550" cy="455" rx="9.7" ry="2.3" fill="#c2cde2" opacity="0.55" transform="rotate(-26,550,455)"/>
<ellipse cx="528" cy="446" rx="4.5" ry="3.8" fill="#2c3347" opacity="0.55" transform="rotate(13,528,446)"/>
<ellipse cx="623" cy="477" rx="7.8" ry="3.0" fill="#c2cde2" opacity="0.55" transform="rotate(-9,623,477)"/>
<ellipse cx="575" cy="518" rx="9.7" ry="6.0" fill="#9a96a6" opacity="0.55" transform="rotate(-27,575,518)"/>
<ellipse cx="495" cy="535" rx="8.0" ry="2.4" fill="#9a96a6" opacity="0.55" transform="rotate(-34,495,535)"/>
<ellipse cx="515" cy="557" rx="8.2" ry="3.8" fill="#9a96a6" opacity="0.55" transform="rotate(39,515,557)"/>
<ellipse cx="488" cy="391" rx="7.8" ry="3.5" fill="#2c3347" opacity="0.55" transform="rotate(15,488,391)"/>
<ellipse cx="507" cy="559" rx="5.3" ry="3.0" fill="#9a96a6" opacity="0.55" transform="rotate(32,507,559)"/>
<ellipse cx="590" cy="483" rx="4.1" ry="3.6" fill="#c2cde2" opacity="0.55" transform="rotate(-5,590,483)"/>
<ellipse cx="576" cy="341" rx="4.2" ry="3.5" fill="#7f8cab" opacity="0.55" transform="rotate(-32,576,341)"/>
<ellipse cx="524" cy="455" rx="9.1" ry="3.5" fill="#a9b6d0" opacity="0.55" transform="rotate(0,524,455)"/>
<ellipse cx="464" cy="448" rx="7.9" ry="3.0" fill="#a9b6d0" opacity="0.55" transform="rotate(35,464,448)"/>
<ellipse cx="485" cy="566" rx="4.3" ry="3.5" fill="#9a96a6" opacity="0.55" transform="rotate(-10,485,566)"/>
<ellipse cx="482" cy="507" rx="8.8" ry="4.1" fill="#9a96a6" opacity="0.55" transform="rotate(-15,482,507)"/>
<ellipse cx="537" cy="537" rx="4.7" ry="4.3" fill="#7d8198" opacity="0.55" transform="rotate(34,537,537)"/>
<ellipse cx="631" cy="493" rx="8.3" ry="2.8" fill="#a9b6d0" opacity="0.55" transform="rotate(-0,631,493)"/>
<ellipse cx="558" cy="424" rx="6.4" ry="4.7" fill="#7f8cab" opacity="0.55" transform="rotate(-28,558,424)"/>
<ellipse cx="486" cy="344" rx="7.5" ry="2.0" fill="#a9b6d0" opacity="0.55" transform="rotate(13,486,344)"/>
<ellipse cx="492" cy="282" rx="8.8" ry="3.4" fill="#7f8cab" opacity="0.55" transform="rotate(-35,492,282)"/>
<ellipse cx="463" cy="411" rx="7.8" ry="4.6" fill="#202636" opacity="0.55" transform="rotate(-37,463,411)"/>
<ellipse cx="501" cy="367" rx="4.8" ry="2.8" fill="#202636" opacity="0.55" transform="rotate(18,501,367)"/>
</g></g>
<rect x="456" y="341" width="194" height="2" fill="#fafafa" />
<line x1="456" y1="343.5" x2="650" y2="343.5" stroke="#555" stroke-width="0.6" />
<rect x="903" y="469" width="89" height="59" fill="#cfcdc5" />
<line x1="948" y1="469" x2="948" y2="528" stroke="#aaa" stroke-width="0.6" />
<line x1="903" y1="499" x2="992" y2="499" stroke="#aaa" stroke-width="0.6" />
<rect x="513" y="587" width="314" height="65" fill="url(#wood)" />
<line x1="513" y1="587" x2="827" y2="587" stroke="#777" stroke-width="0.8" />
<line x1="513" y1="652" x2="827" y2="652" stroke="#555" stroke-width="1" />
<rect x="441" y="279" width="15" height="106" fill="#f5f5f5" />
<line x1="441.5" y1="222" x2="441.5" y2="456" stroke="#666" stroke-width="0.8" />
<line x1="452.5" y1="290" x2="452.5" y2="380" stroke="#777" stroke-width="0.8" />
<rect x="903" y="457" width="49" height="12" fill="#f5f5f5" />
<path d="M885.5,338 H882.5 V385 H879.5 V575" stroke="#222" stroke-width="1" fill="#fff"/>
<rect x="880" y="386" width="5" height="189" fill="#fff" />
<path d="M897.5,338 H900.5 V455" stroke="#333" stroke-width="0.8" fill="none"/>
<rect x="898" y="338" width="2" height="117" fill="#fff" />
<rect x="337" y="208" width="36" height="11" fill="#000" />
<rect x="337" y="208" width="12" height="125" fill="#000" />
<rect x="444" y="208" width="107" height="12" fill="#000" />
<rect x="444" y="208" width="12" height="54" fill="#000" />
<rect x="773" y="208" width="124" height="12" fill="#000" />
<rect x="885" y="208" width="12" height="54" fill="#000" />
<rect x="968" y="208" width="36" height="12" fill="#000" />
<rect x="992" y="208" width="12" height="125" fill="#000" />
<rect x="438" y="456" width="19" height="137" fill="#000" />
<rect x="438" y="575" width="65" height="18" fill="#000" />
<rect x="648" y="575" width="30" height="24" fill="#000" />
<rect x="885" y="457" width="18" height="136" fill="#000" />
<rect x="838" y="575" width="65" height="18" fill="#000" />
<rect x="992" y="415" width="12" height="137" fill="#000" />
<rect x="992" y="540" width="24" height="12" fill="#000" />
<rect x="373" y="208" width="71" height="11" fill="#7b7b7b" />
<rect x="551" y="208" width="41" height="12" fill="#7b7b7b" />
<rect x="660" y="208" width="113" height="12" fill="#7b7b7b" />
<rect x="897" y="208" width="71" height="12" fill="#7b7b7b" />
<rect x="337" y="333" width="12" height="219" fill="#7b7b7b" />
<rect x="444" y="262" width="12" height="17" fill="#7b7b7b" />
<rect x="444" y="385" width="12" height="71" fill="#7b7b7b" />
<rect x="456" y="333" width="32" height="8" fill="#7b7b7b" />
<rect x="541" y="333" width="136" height="8" fill="#7b7b7b" />
<rect x="580" y="220" width="7" height="120" fill="#7b7b7b" />
<rect x="664" y="305" width="13" height="35" fill="#7b7b7b" />
<rect x="349" y="456" width="17" height="12" fill="#7b7b7b" />
<rect x="428" y="456" width="10" height="12" fill="#7b7b7b" />
<rect x="650" y="391" width="12" height="118" fill="#7b7b7b" />
<rect x="666" y="391" width="11" height="118" fill="#7b7b7b" />
<rect x="650" y="563" width="27" height="12" fill="#7b7b7b" />
<rect x="503" y="575" width="14" height="12" fill="#7b7b7b" />
<rect x="639" y="575" width="9" height="13" fill="#7b7b7b" />
<rect x="678" y="575" width="24" height="13" fill="#7b7b7b" />
<rect x="823" y="575" width="15" height="12" fill="#7b7b7b" />
<rect x="885" y="340" width="12" height="117" fill="#7b7b7b" />
<rect x="952" y="457" width="40" height="12" fill="#7b7b7b" />
<rect x="992" y="333" width="12" height="82" fill="#7b7b7b" />
<rect x="963" y="220" width="29" height="32" fill="#7b7b7b" />
<rect x="517" y="575" width="122" height="13" fill="#f7f7f7" />
<path d="M519.5,577.5 H583.5 V581.5 H519.5 M573.5,580.5 H637.5 V584.5 H573.5 Z" stroke="#444" stroke-width="0.8" fill="none"/>
<rect x="702" y="575" width="121" height="13" fill="#f7f7f7" />
<path d="M704.5,577.5 H768.5 V581.5 H704.5 M758.5,580.5 H821.5 V584.5 H758.5 Z" stroke="#444" stroke-width="0.8" fill="none"/>
<rect x="592" y="207" width="68" height="14" fill="#fff" stroke="#999" stroke-width="0.8"/>
<path d="M617,193 L636,193 L636,198 L642,198 L626.5,207 L611,198 L617,198 Z" fill="#555"/>
<rect x="616" y="183" width="21" height="8" fill="#444" />
<line x1="623" y1="183" x2="623" y2="191" stroke="#ddd" stroke-width="1" />
<line x1="630" y1="183" x2="630" y2="191" stroke="#ddd" stroke-width="1" />
<g transform="translate(0.5,0.5)">
<polyline points="337,528 307,528 307,762 328,762" stroke="#3a3a3a" stroke-width="0.9" fill="none"/>
<polyline points="337,532 311,532 311,758 331,758" stroke="#3a3a3a" stroke-width="0.9" fill="none"/>
<polyline points="307,564 364,564" stroke="#3a3a3a" stroke-width="0.9" fill="none"/>
<polyline points="311,568 364,568" stroke="#3a3a3a" stroke-width="0.9" fill="none"/>
<polyline points="328,762 331,758 333,755 337,758 340,755 344,758 347,755 351,758 355,762 355,762 378,762 378,741 402,741 402,735 426,735 452,712 457,710 457,694 510,694 510,645" stroke="#3a3a3a" stroke-width="0.9" fill="none"/>
<polyline points="331,758 333,752 337,755 340,752 344,755 347,752 351,755 353,758 375,758 375,737 399,737 399,732 424,732 450,708 454,706 454,690 507,690" stroke="#3a3a3a" stroke-width="0.9" fill="none"/>
<polyline points="1012,762 1009,758 1007,755 1003,758 1000,755 996,758 993,755 989,758 985,762 985,762 962,762 962,741 938,741 938,735 914,735 888,712 883,710 883,694 830,694 830,645" stroke="#3a3a3a" stroke-width="0.9" fill="none"/>
<polyline points="1009,758 1007,752 1003,755 1000,752 996,755 993,752 989,755 987,758 965,758 965,737 941,737 941,732 916,732 890,708 886,706 886,690 833,690" stroke="#3a3a3a" stroke-width="0.9" fill="none"/>
<polyline points="1033,528 1033,762 1012,762" stroke="#3a3a3a" stroke-width="0.9" fill="none"/>
<polyline points="1029,532 1029,758 1009,758" stroke="#3a3a3a" stroke-width="0.9" fill="none"/>
<polyline points="513,697 828,697" stroke="#3a3a3a" stroke-width="0.9" fill="none"/>
<polyline points="513,645 513,697" stroke="#3a3a3a" stroke-width="0.9" fill="none"/>
<polyline points="828,645 828,697" stroke="#3a3a3a" stroke-width="0.9" fill="none"/>
<polyline points="364,468 364,645 513,645" stroke="#3a3a3a" stroke-width="0.9" fill="none"/>
<polyline points="366,468 366,641 510,641" stroke="#3a3a3a" stroke-width="0.9" fill="none"/>
<polyline points="426,468 426,601 513,601" stroke="#3a3a3a" stroke-width="0.9" fill="none"/>
<polyline points="430,468 430,605 513,605" stroke="#3a3a3a" stroke-width="0.9" fill="none"/>
<polyline points="366,534 426,534" stroke="#3a3a3a" stroke-width="0.8" fill="none"/>
<polyline points="366,535 392,623 482,641" stroke="#3a3a3a" stroke-width="0.7" fill="none"/>
<rect x="370" y="475" width="54" height="19" fill="#fff" stroke="#444" stroke-width="0.8"/>
<line x1="370" y1="494" x2="424" y2="475" stroke="#444" stroke-width="0.7" />
<text x="381" y="489" font-size="11" fill="#222" text-anchor="middle" >A</text>
<text x="414" y="493" font-size="11" fill="#222" text-anchor="middle" >C</text>
<line x1="483" y1="605" x2="483" y2="641" stroke="#3a3a3a" stroke-width="0.8" />
<line x1="491" y1="605" x2="491" y2="641" stroke="#3a3a3a" stroke-width="0.8" />
<line x1="495" y1="605" x2="495" y2="641" stroke="#3a3a3a" stroke-width="0.8" />
<line x1="500" y1="605" x2="500" y2="641" stroke="#3a3a3a" stroke-width="0.8" />
<polyline points="975,528 975,644 828,644" stroke="#3a3a3a" stroke-width="0.9" fill="none"/>
<polyline points="978,528 978,641 831,641" stroke="#3a3a3a" stroke-width="0.9" fill="none"/>
<polyline points="912,530 912,601 831,601" stroke="#3a3a3a" stroke-width="0.9" fill="none"/>
<polyline points="915,530 915,605 831,605" stroke="#3a3a3a" stroke-width="0.9" fill="none"/>
<polyline points="974,536 950,622 860,640" stroke="#3a3a3a" stroke-width="0.7" fill="none"/>
<line x1="838" y1="605" x2="838" y2="641" stroke="#3a3a3a" stroke-width="0.8" />
<line x1="843" y1="605" x2="843" y2="641" stroke="#3a3a3a" stroke-width="0.8" />
<line x1="849" y1="605" x2="849" y2="641" stroke="#3a3a3a" stroke-width="0.8" />
<line x1="858" y1="605" x2="858" y2="641" stroke="#3a3a3a" stroke-width="0.8" />
<polyline points="977,528 1033,528" stroke="#3a3a3a" stroke-width="0.9" fill="none"/>
<polyline points="978,568 1033,568" stroke="#3a3a3a" stroke-width="0.9" fill="none"/>
<polyline points="981,532 1029,532 1029,564 981,564 981,532" stroke="#3a3a3a" stroke-width="0.8" fill="none"/>
<line x1="513" y1="655" x2="641" y2="655" stroke="#3a3a3a" stroke-width="0.8" />
<line x1="700" y1="655" x2="828" y2="655" stroke="#3a3a3a" stroke-width="0.8" />
<line x1="513" y1="660" x2="641" y2="660" stroke="#3a3a3a" stroke-width="0.8" />
<line x1="700" y1="660" x2="828" y2="660" stroke="#3a3a3a" stroke-width="0.8" />
<line x1="513" y1="664" x2="641" y2="664" stroke="#3a3a3a" stroke-width="0.8" />
<line x1="700" y1="664" x2="828" y2="664" stroke="#3a3a3a" stroke-width="0.8" />
<polyline points="641,647 700,647 700,697" stroke="#3a3a3a" stroke-width="0.9" fill="none"/>
<polyline points="641,647 641,697" stroke="#3a3a3a" stroke-width="0.9" fill="none"/>
<polyline points="644,650 697,650 697,685 690,685 690,697" stroke="#3a3a3a" stroke-width="0.7" fill="none"/>
<polyline points="644,650 644,685 651,685 651,697" stroke="#3a3a3a" stroke-width="0.7" fill="none"/>
<polyline points="428,605 512,605" stroke="#3a3a3a" stroke-width="0.8" fill="none"/>
</g>
<rect x="326" y="652" width="30" height="30" fill="#000" />
<rect x="473" y="652" width="30" height="30" fill="#000" />
<rect x="648" y="652" width="30" height="30" fill="#000" />
<rect x="838" y="652" width="30" height="30" fill="#000" />
<rect x="983" y="652" width="30" height="30" fill="#000" />
<rect x="347" y="130" width="649" height="1" fill="#666"/>
<line x1="343.5" y1="134.5" x2="351.5" y2="126.5" stroke="#111" stroke-width="1.3" />
<line x1="988.5" y1="134.5" x2="996.5" y2="126.5" stroke="#111" stroke-width="1.3" />
<rect x="343" y="151" width="654" height="1" fill="#666"/>
<line x1="343.5" y1="155.5" x2="351.5" y2="147.5" stroke="#111" stroke-width="1.3" />
<line x1="440.5" y1="155.5" x2="448.5" y2="147.5" stroke="#111" stroke-width="1.3" />
<line x1="452.5" y1="155.5" x2="460.5" y2="147.5" stroke="#111" stroke-width="1.3" />
<line x1="541.5" y1="155.5" x2="549.5" y2="147.5" stroke="#111" stroke-width="1.3" />
<line x1="546.5" y1="155.5" x2="554.5" y2="147.5" stroke="#111" stroke-width="1.3" />
<line x1="881.5" y1="155.5" x2="889.5" y2="147.5" stroke="#111" stroke-width="1.3" />
<line x1="893.5" y1="155.5" x2="901.5" y2="147.5" stroke="#111" stroke-width="1.3" />
<line x1="989.5" y1="155.5" x2="997.5" y2="147.5" stroke="#111" stroke-width="1.3" />
<rect x="343" y="172" width="654" height="1" fill="#666"/>
<line x1="343.5" y1="176.5" x2="351.5" y2="168.5" stroke="#111" stroke-width="1.3" />
<line x1="440.5" y1="176.5" x2="448.5" y2="168.5" stroke="#111" stroke-width="1.3" />
<line x1="452.5" y1="176.5" x2="460.5" y2="168.5" stroke="#111" stroke-width="1.3" />
<line x1="541.5" y1="176.5" x2="549.5" y2="168.5" stroke="#111" stroke-width="1.3" />
<line x1="546.5" y1="176.5" x2="554.5" y2="168.5" stroke="#111" stroke-width="1.3" />
<line x1="588.5" y1="176.5" x2="596.5" y2="168.5" stroke="#111" stroke-width="1.3" />
<line x1="656.5" y1="176.5" x2="664.5" y2="168.5" stroke="#111" stroke-width="1.3" />
<line x1="881.5" y1="176.5" x2="889.5" y2="168.5" stroke="#111" stroke-width="1.3" />
<line x1="989.5" y1="176.5" x2="997.5" y2="168.5" stroke="#111" stroke-width="1.3" />
<rect x="347" y="124" width="1" height="69" fill="#7a7a7a"/>
<rect x="444" y="124" width="1" height="69" fill="#7a7a7a"/>
<rect x="456" y="124" width="1" height="69" fill="#7a7a7a"/>
<rect x="545" y="124" width="1" height="69" fill="#7a7a7a"/>
<rect x="550" y="124" width="1" height="69" fill="#7a7a7a"/>
<rect x="885" y="124" width="1" height="69" fill="#7a7a7a"/>
<rect x="992" y="124" width="1" height="69" fill="#7a7a7a"/>
<rect x="592" y="165" width="1" height="28" fill="#7a7a7a"/>
<rect x="660" y="165" width="1" height="28" fill="#7a7a7a"/>
<rect x="897" y="145" width="1" height="21" fill="#7a7a7a"/>
<text x="837.5" y="127" font-size="8.5" fill="#1a1a1a" text-anchor="middle" font-family="Liberation Serif" transform="scale(0.8,1)">10850</text>
<text x="495.0" y="148.5" font-size="8.5" fill="#1a1a1a" text-anchor="middle" font-family="Liberation Serif" transform="scale(0.8,1)">1600</text>
<text x="561.2" y="148.5" font-size="8.5" fill="#1a1a1a" text-anchor="middle" font-family="Liberation Serif" transform="scale(0.8,1)">200</text>
<text x="625.0" y="148.5" font-size="8.5" fill="#1a1a1a" text-anchor="middle" font-family="Liberation Serif" transform="scale(0.8,1)">1500</text>
<text x="685.0" y="148.5" font-size="8.5" fill="#1a1a1a" text-anchor="middle" font-family="Liberation Serif" transform="scale(0.8,1)">100</text>
<text x="897.5" y="148.5" font-size="8.5" fill="#1a1a1a" text-anchor="middle" font-family="Liberation Serif" transform="scale(0.8,1)">5650</text>
<text x="1112.5" y="148.5" font-size="8.5" fill="#1a1a1a" text-anchor="middle" font-family="Liberation Serif" transform="scale(0.8,1)">200</text>
<text x="1180.0" y="148.5" font-size="8.5" fill="#1a1a1a" text-anchor="middle" font-family="Liberation Serif" transform="scale(0.8,1)">1600</text>
<text x="495.0" y="169.5" font-size="8.5" fill="#1a1a1a" text-anchor="middle" font-family="Liberation Serif" transform="scale(0.8,1)">1600</text>
<text x="625.0" y="169.5" font-size="8.5" fill="#1a1a1a" text-anchor="middle" font-family="Liberation Serif" transform="scale(0.8,1)">1500</text>
<text x="713.8" y="169.5" font-size="8.5" fill="#1a1a1a" text-anchor="middle" font-family="Liberation Serif" transform="scale(0.8,1)">700</text>
<text x="782.5" y="169.5" font-size="8.5" fill="#1a1a1a" text-anchor="middle" font-family="Liberation Serif" transform="scale(0.8,1)">1150</text>
<text x="966.2" y="169.5" font-size="8.5" fill="#1a1a1a" text-anchor="middle" font-family="Liberation Serif" transform="scale(0.8,1)">3800</text>
<text x="1172.5" y="169.5" font-size="8.5" fill="#1a1a1a" text-anchor="middle" font-family="Liberation Serif" transform="scale(0.8,1)">1800</text>
<rect x="344" y="798" width="652" height="1" fill="#666"/>
<line x1="344.5" y1="802.5" x2="352.5" y2="794.5" stroke="#111" stroke-width="1.3" />
<line x1="363.5" y1="802.5" x2="371.5" y2="794.5" stroke="#111" stroke-width="1.3" />
<line x1="422.5" y1="802.5" x2="430.5" y2="794.5" stroke="#111" stroke-width="1.3" />
<line x1="440.5" y1="802.5" x2="448.5" y2="794.5" stroke="#111" stroke-width="1.3" />
<line x1="452.5" y1="802.5" x2="460.5" y2="794.5" stroke="#111" stroke-width="1.3" />
<line x1="512.5" y1="802.5" x2="520.5" y2="794.5" stroke="#111" stroke-width="1.3" />
<line x1="637.5" y1="802.5" x2="645.5" y2="794.5" stroke="#111" stroke-width="1.3" />
<line x1="657.5" y1="802.5" x2="665.5" y2="794.5" stroke="#111" stroke-width="1.3" />
<line x1="661.5" y1="802.5" x2="669.5" y2="794.5" stroke="#111" stroke-width="1.3" />
<line x1="696.5" y1="802.5" x2="704.5" y2="794.5" stroke="#111" stroke-width="1.3" />
<line x1="820.5" y1="802.5" x2="828.5" y2="794.5" stroke="#111" stroke-width="1.3" />
<line x1="882.5" y1="802.5" x2="890.5" y2="794.5" stroke="#111" stroke-width="1.3" />
<line x1="893.5" y1="802.5" x2="901.5" y2="794.5" stroke="#111" stroke-width="1.3" />
<line x1="902.5" y1="802.5" x2="910.5" y2="794.5" stroke="#111" stroke-width="1.3" />
<line x1="948.5" y1="802.5" x2="956.5" y2="794.5" stroke="#111" stroke-width="1.3" />
<line x1="988.5" y1="802.5" x2="996.5" y2="794.5" stroke="#111" stroke-width="1.3" />
<rect x="348" y="777" width="1" height="26" fill="#7a7a7a"/>
<rect x="367" y="777" width="1" height="26" fill="#7a7a7a"/>
<rect x="426" y="777" width="1" height="26" fill="#7a7a7a"/>
<rect x="444" y="777" width="1" height="26" fill="#7a7a7a"/>
<rect x="456" y="777" width="1" height="26" fill="#7a7a7a"/>
<rect x="516" y="777" width="1" height="26" fill="#7a7a7a"/>
<rect x="641" y="777" width="1" height="26" fill="#7a7a7a"/>
<rect x="661" y="777" width="1" height="26" fill="#7a7a7a"/>
<rect x="665" y="777" width="1" height="26" fill="#7a7a7a"/>
<rect x="700" y="777" width="1" height="26" fill="#7a7a7a"/>
<rect x="824" y="777" width="1" height="26" fill="#7a7a7a"/>
<rect x="886" y="777" width="1" height="26" fill="#7a7a7a"/>
<rect x="897" y="777" width="1" height="26" fill="#7a7a7a"/>
<rect x="906" y="777" width="1" height="26" fill="#7a7a7a"/>
<rect x="952" y="777" width="1" height="26" fill="#7a7a7a"/>
<rect x="992" y="777" width="1" height="26" fill="#7a7a7a"/>
<rect x="344" y="818" width="652" height="1" fill="#666"/>
<line x1="344.5" y1="822.5" x2="352.5" y2="814.5" stroke="#111" stroke-width="1.3" />
<line x1="440.5" y1="822.5" x2="448.5" y2="814.5" stroke="#111" stroke-width="1.3" />
<line x1="452.5" y1="822.5" x2="460.5" y2="814.5" stroke="#111" stroke-width="1.3" />
<line x1="657.5" y1="822.5" x2="665.5" y2="814.5" stroke="#111" stroke-width="1.3" />
<line x1="661.5" y1="822.5" x2="669.5" y2="814.5" stroke="#111" stroke-width="1.3" />
<line x1="882.5" y1="822.5" x2="890.5" y2="814.5" stroke="#111" stroke-width="1.3" />
<line x1="893.5" y1="822.5" x2="901.5" y2="814.5" stroke="#111" stroke-width="1.3" />
<line x1="988.5" y1="822.5" x2="996.5" y2="814.5" stroke="#111" stroke-width="1.3" />
<rect x="344" y="839" width="652" height="1" fill="#666"/>
<line x1="344.5" y1="843.5" x2="352.5" y2="835.5" stroke="#111" stroke-width="1.3" />
<line x1="988.5" y1="843.5" x2="996.5" y2="835.5" stroke="#111" stroke-width="1.3" />
<rect x="348" y="803" width="1" height="42" fill="#7a7a7a"/>
<rect x="992" y="803" width="1" height="42" fill="#7a7a7a"/>
<text x="447.5" y="794.5" font-size="8.5" fill="#1a1a1a" text-anchor="middle" font-family="Liberation Serif" transform="scale(0.8,1)">300</text>
<text x="495.0" y="794.5" font-size="8.5" fill="#1a1a1a" text-anchor="middle" font-family="Liberation Serif" transform="scale(0.8,1)">1000</text>
<text x="543.8" y="794.5" font-size="8.5" fill="#1a1a1a" text-anchor="middle" font-family="Liberation Serif" transform="scale(0.8,1)">300</text>
<text x="607.5" y="794.5" font-size="8.5" fill="#1a1a1a" text-anchor="middle" font-family="Liberation Serif" transform="scale(0.8,1)">1035</text>
<text x="722.5" y="794.5" font-size="8.5" fill="#1a1a1a" text-anchor="middle" font-family="Liberation Serif" transform="scale(0.8,1)">2090</text>
<text x="812.5" y="794.5" font-size="8.5" fill="#1a1a1a" text-anchor="middle" font-family="Liberation Serif" transform="scale(0.8,1)">325</text>
<text x="853.8" y="794.5" font-size="8.5" fill="#1a1a1a" text-anchor="middle" font-family="Liberation Serif" transform="scale(0.8,1)">575</text>
<text x="952.5" y="794.5" font-size="8.5" fill="#1a1a1a" text-anchor="middle" font-family="Liberation Serif" transform="scale(0.8,1)">2088</text>
<text x="1068.8" y="794.5" font-size="8.5" fill="#1a1a1a" text-anchor="middle" font-family="Liberation Serif" transform="scale(0.8,1)">1037</text>
<text x="1127.5" y="794.5" font-size="8.5" fill="#1a1a1a" text-anchor="middle" font-family="Liberation Serif" transform="scale(0.8,1)">155</text>
<text x="1161.2" y="794.5" font-size="8.5" fill="#1a1a1a" text-anchor="middle" font-family="Liberation Serif" transform="scale(0.8,1)">770</text>
<text x="1213.8" y="794.5" font-size="8.5" fill="#1a1a1a" text-anchor="middle" font-family="Liberation Serif" transform="scale(0.8,1)">675</text>
<text x="495.0" y="814.5" font-size="8.5" fill="#1a1a1a" text-anchor="middle" font-family="Liberation Serif" transform="scale(0.8,1)">1600</text>
<text x="561.2" y="814.5" font-size="8.5" fill="#1a1a1a" text-anchor="middle" font-family="Liberation Serif" transform="scale(0.8,1)">200</text>
<text x="697.5" y="814.5" font-size="8.5" fill="#1a1a1a" text-anchor="middle" font-family="Liberation Serif" transform="scale(0.8,1)">3450</text>
<text x="970.0" y="814.5" font-size="8.5" fill="#1a1a1a" text-anchor="middle" font-family="Liberation Serif" transform="scale(0.8,1)">3700</text>
<text x="1112.5" y="814.5" font-size="8.5" fill="#1a1a1a" text-anchor="middle" font-family="Liberation Serif" transform="scale(0.8,1)">200</text>
<text x="1180.0" y="814.5" font-size="8.5" fill="#1a1a1a" text-anchor="middle" font-family="Liberation Serif" transform="scale(0.8,1)">1600</text>
<text x="837.5" y="835.5" font-size="8.5" fill="#1a1a1a" text-anchor="middle" font-family="Liberation Serif" transform="scale(0.8,1)">10850</text>
<rect x="230" y="215" width="1" height="442" fill="#666"/>
<rect x="251" y="215" width="1" height="442" fill="#666"/>
<rect x="271" y="215" width="1" height="442" fill="#666"/>
<rect x="225" y="219" width="68" height="1" fill="#666"/>
<line x1="226.5" y1="215.5" x2="234.5" y2="223.5" stroke="#111" stroke-width="1.3" />
<line x1="247.5" y1="215.5" x2="255.5" y2="223.5" stroke="#111" stroke-width="1.3" />
<line x1="267.5" y1="215.5" x2="275.5" y2="223.5" stroke="#111" stroke-width="1.3" />
<rect x="245" y="456" width="48" height="1" fill="#666"/>
<line x1="247.5" y1="452.5" x2="255.5" y2="460.5" stroke="#111" stroke-width="1.3" />
<line x1="267.5" y1="452.5" x2="275.5" y2="460.5" stroke="#111" stroke-width="1.3" />
<rect x="245" y="468" width="48" height="1" fill="#666"/>
<line x1="247.5" y1="464.5" x2="255.5" y2="472.5" stroke="#111" stroke-width="1.3" />
<line x1="267.5" y1="464.5" x2="275.5" y2="472.5" stroke="#111" stroke-width="1.3" />
<rect x="245" y="576" width="48" height="1" fill="#666"/>
<line x1="247.5" y1="572.5" x2="255.5" y2="580.5" stroke="#111" stroke-width="1.3" />
<line x1="267.5" y1="572.5" x2="275.5" y2="580.5" stroke="#111" stroke-width="1.3" />
<rect x="245" y="586" width="48" height="1" fill="#666"/>
<line x1="247.5" y1="582.5" x2="255.5" y2="590.5" stroke="#111" stroke-width="1.3" />
<line x1="267.5" y1="582.5" x2="275.5" y2="590.5" stroke="#111" stroke-width="1.3" />
<rect x="225" y="652" width="68" height="1" fill="#666"/>
<line x1="226.5" y1="648.5" x2="234.5" y2="656.5" stroke="#111" stroke-width="1.3" />
<line x1="247.5" y1="648.5" x2="255.5" y2="656.5" stroke="#111" stroke-width="1.3" />
<line x1="267.5" y1="648.5" x2="275.5" y2="656.5" stroke="#111" stroke-width="1.3" />
<text transform="translate(248.5,337) rotate(-90) scale(0.8,1)" font-size="8.5" fill="#1a1a1a" text-anchor="middle" font-family="Liberation Serif">4000</text>
<text transform="translate(248.5,522) rotate(-90) scale(0.8,1)" font-size="8.5" fill="#1a1a1a" text-anchor="middle" font-family="Liberation Serif">1800</text>
<text transform="translate(248.5,619) rotate(-90) scale(0.8,1)" font-size="8.5" fill="#1a1a1a" text-anchor="middle" font-family="Liberation Serif">1100</text>
<text transform="translate(269,337) rotate(-90) scale(0.8,1)" font-size="8.5" fill="#1a1a1a" text-anchor="middle" font-family="Liberation Serif">4000</text>
<text transform="translate(269,522) rotate(-90) scale(0.8,1)" font-size="8.5" fill="#1a1a1a" text-anchor="middle" font-family="Liberation Serif">1800</text>
<text transform="translate(269,619) rotate(-90) scale(0.8,1)" font-size="8.5" fill="#1a1a1a" text-anchor="middle" font-family="Liberation Serif">1100</text>
<text transform="translate(248.5,462) rotate(-90) scale(0.8,1)" font-size="8.5" fill="#1a1a1a" text-anchor="middle" font-family="Liberation Serif">200</text>
<text transform="translate(248.5,581) rotate(-90) scale(0.8,1)" font-size="8.5" fill="#1a1a1a" text-anchor="middle" font-family="Liberation Serif">200</text>
<text transform="translate(227.5,436) rotate(-90) scale(0.8,1)" font-size="8.5" fill="#1a1a1a" text-anchor="middle" font-family="Liberation Serif">7300</text>
<rect x="1069" y="215" width="1" height="442" fill="#666"/>
<rect x="1089" y="215" width="1" height="442" fill="#666"/>
<rect x="1111" y="215" width="1" height="442" fill="#666"/>
<rect x="1048" y="219" width="69" height="1" fill="#666"/>
<line x1="1065.5" y1="215.5" x2="1073.5" y2="223.5" stroke="#111" stroke-width="1.3" />
<line x1="1085.5" y1="215.5" x2="1093.5" y2="223.5" stroke="#111" stroke-width="1.3" />
<line x1="1107.5" y1="215.5" x2="1115.5" y2="223.5" stroke="#111" stroke-width="1.3" />
<rect x="1048" y="456" width="47" height="1" fill="#666"/>
<line x1="1065.5" y1="452.5" x2="1073.5" y2="460.5" stroke="#111" stroke-width="1.3" />
<line x1="1085.5" y1="452.5" x2="1093.5" y2="460.5" stroke="#111" stroke-width="1.3" />
<rect x="1048" y="468" width="47" height="1" fill="#666"/>
<line x1="1065.5" y1="464.5" x2="1073.5" y2="472.5" stroke="#111" stroke-width="1.3" />
<line x1="1085.5" y1="464.5" x2="1093.5" y2="472.5" stroke="#111" stroke-width="1.3" />
<rect x="1048" y="576" width="47" height="1" fill="#666"/>
<line x1="1065.5" y1="572.5" x2="1073.5" y2="580.5" stroke="#111" stroke-width="1.3" />
<line x1="1085.5" y1="572.5" x2="1093.5" y2="580.5" stroke="#111" stroke-width="1.3" />
<rect x="1048" y="586" width="47" height="1" fill="#666"/>
<line x1="1065.5" y1="582.5" x2="1073.5" y2="590.5" stroke="#111" stroke-width="1.3" />
<line x1="1085.5" y1="582.5" x2="1093.5" y2="590.5" stroke="#111" stroke-width="1.3" />
<rect x="1048" y="652" width="69" height="1" fill="#666"/>
<line x1="1065.5" y1="648.5" x2="1073.5" y2="656.5" stroke="#111" stroke-width="1.3" />
<line x1="1085.5" y1="648.5" x2="1093.5" y2="656.5" stroke="#111" stroke-width="1.3" />
<line x1="1107.5" y1="648.5" x2="1115.5" y2="656.5" stroke="#111" stroke-width="1.3" />
<text transform="translate(1066.5,337) rotate(-90) scale(0.8,1)" font-size="8.5" fill="#1a1a1a" text-anchor="middle" font-family="Liberation Serif">4000</text>
<text transform="translate(1066.5,522) rotate(-90) scale(0.8,1)" font-size="8.5" fill="#1a1a1a" text-anchor="middle" font-family="Liberation Serif">1800</text>
<text transform="translate(1066.5,619) rotate(-90) scale(0.8,1)" font-size="8.5" fill="#1a1a1a" text-anchor="middle" font-family="Liberation Serif">1100</text>
<text transform="translate(1087,337) rotate(-90) scale(0.8,1)" font-size="8.5" fill="#1a1a1a" text-anchor="middle" font-family="Liberation Serif">4000</text>
<text transform="translate(1087,522) rotate(-90) scale(0.8,1)" font-size="8.5" fill="#1a1a1a" text-anchor="middle" font-family="Liberation Serif">1800</text>
<text transform="translate(1087,619) rotate(-90) scale(0.8,1)" font-size="8.5" fill="#1a1a1a" text-anchor="middle" font-family="Liberation Serif">1100</text>
<text transform="translate(1087,462) rotate(-90) scale(0.8,1)" font-size="8.5" fill="#1a1a1a" text-anchor="middle" font-family="Liberation Serif">200</text>
<text transform="translate(1087,581) rotate(-90) scale(0.8,1)" font-size="8.5" fill="#1a1a1a" text-anchor="middle" font-family="Liberation Serif">200</text>
<text transform="translate(1108.5,436) rotate(-90) scale(0.8,1)" font-size="8.5" fill="#1a1a1a" text-anchor="middle" font-family="Liberation Serif">7300</text>
<rect x="353" y="222" width="10" height="70" fill="#fff" stroke="#666" stroke-width="0.7"/>
<circle cx="358" cy="230" r="3.5" fill="#fff" stroke="#666" stroke-width="0.6"/><circle cx="358" cy="238" r="3.5" fill="#fff" stroke="#666" stroke-width="0.6"/>
<path d="M364,239 L386,239 C400,239 404,246 404,250 C404,255 400,260 386,260 L364,260 Z" fill="#fff" stroke="#333" stroke-width="0.8"/>
<rect x="352" y="276" width="36" height="59" fill="#fff" stroke="#666" stroke-width="0.7"/>
<rect x="362" y="287" width="23" height="35" fill="#fff" stroke="#666" stroke-width="0.7"/>
<line x1="349" y1="275" x2="396" y2="275" stroke="#222" stroke-width="1.2" />
<line x1="432" y1="275" x2="444" y2="275" stroke="#222" stroke-width="1.2" />
<rect x="354" y="348" width="46" height="99" rx="23" fill="#fff" stroke="#555" stroke-width="0.9"/>
<rect x="356.5" y="351" width="41" height="93" rx="20.5" fill="#8fc5de" stroke="#666" stroke-width="0.6"/>
<rect x="361" y="362" width="32" height="68" rx="16" fill="none" stroke="#557a8c" stroke-width="0.6"/>
<path d="M360,380 L398,352 M360,395 L398,367 M362,430 L396,405" stroke="#d6eef8" stroke-width="2.5" opacity="0.8"/>
<rect x="352" y="347" width="92" height="109" fill="none" stroke="#888" stroke-width="0.7"/>
<rect x="459" y="220" width="82" height="29" fill="#fff" stroke="#444" stroke-width="0.7"/>
<path d="M483,249 L514,249 L514,262 C514,272 507,279 498.5,279 C490,279 483,272 483,262 Z" fill="#fff" stroke="#333" stroke-width="0.8"/>
<rect x="550" y="232.0" width="26" height="2.6" fill="#fff" stroke="#777" stroke-width="0.5" transform="rotate(0,563,233.3)"/>
<rect x="550" y="240.2" width="26" height="2.6" fill="#fff" stroke="#777" stroke-width="0.5" transform="rotate(-4,563,241.5)"/>
<rect x="550" y="248.4" width="26" height="2.6" fill="#fff" stroke="#777" stroke-width="0.5" transform="rotate(0,563,249.7)"/>
<rect x="550" y="256.6" width="26" height="2.6" fill="#fff" stroke="#777" stroke-width="0.5" transform="rotate(-4,563,257.9)"/>
<rect x="550" y="264.8" width="26" height="2.6" fill="#fff" stroke="#777" stroke-width="0.5" transform="rotate(0,563,266.1)"/>
<rect x="550" y="273.0" width="26" height="2.6" fill="#fff" stroke="#777" stroke-width="0.5" transform="rotate(-4,563,274.3)"/>
<rect x="550" y="281.2" width="26" height="2.6" fill="#fff" stroke="#777" stroke-width="0.5" transform="rotate(0,563,282.5)"/>
<rect x="550" y="289.4" width="26" height="2.6" fill="#fff" stroke="#777" stroke-width="0.5" transform="rotate(-4,563,290.7)"/>
<rect x="550" y="297.6" width="26" height="2.6" fill="#fff" stroke="#777" stroke-width="0.5" transform="rotate(0,563,298.9)"/>
<rect x="550" y="305.8" width="26" height="2.6" fill="#fff" stroke="#777" stroke-width="0.5" transform="rotate(-4,563,307.1)"/>
<rect x="550" y="314.0" width="26" height="2.6" fill="#fff" stroke="#777" stroke-width="0.5" transform="rotate(0,563,315.3)"/>
<rect x="550" y="322.2" width="26" height="2.6" fill="#fff" stroke="#777" stroke-width="0.5" transform="rotate(-4,563,323.5)"/>
<line x1="563" y1="222" x2="563" y2="330" stroke="#666" stroke-width="0.5" />
<rect x="545" y="219" width="35" height="113" fill="none" stroke="#666" stroke-width="0.8"/>
<rect x="592" y="305" width="72" height="25" fill="#fff" stroke="#333" stroke-width="1"/>
<path d="M607,318 c5,-6 12,4 18,-2 c6,-6 12,6 18,-3 c4,-4 8,4 4,6 c-6,3 -12,-2 -18,2 c-6,3 -12,-5 -20,-3" stroke="#666" stroke-width="0.6" fill="none"/>
<path d="M595,284 A65,65 0 0 0 660,221" stroke="#777" stroke-width="0.6" fill="none" stroke-dasharray="3,2"/>
<rect x="593" y="222" width="3" height="64" fill="#fff" stroke="#777" stroke-width="0.6"/>
<rect x="760" y="222" width="50" height="83" fill="#fff" stroke="#444" stroke-width="1"/>
<rect x="743" y="236" width="16" height="24" fill="#fff" stroke="#555" stroke-width="0.7"/>
<line x1="746" y1="236" x2="746" y2="260" stroke="#777" stroke-width="0.6" />
<rect x="743" y="271" width="16" height="24" fill="#fff" stroke="#555" stroke-width="0.7"/>
<line x1="746" y1="271" x2="746" y2="295" stroke="#777" stroke-width="0.6" />
<rect x="810" y="236" width="16" height="24" fill="#fff" stroke="#555" stroke-width="0.7"/>
<line x1="823" y1="236" x2="823" y2="260" stroke="#777" stroke-width="0.6" />
<rect x="810" y="271" width="16" height="24" fill="#fff" stroke="#555" stroke-width="0.7"/>
<line x1="823" y1="271" x2="823" y2="295" stroke="#777" stroke-width="0.6" />
<rect x="907" y="224" width="35" height="38" fill="#fff" stroke="#555" stroke-width="0.9"/>
<path d="M907,262 L940,274 L942,270" stroke="#444" stroke-width="1" fill="none"/>
<rect x="953" y="252" width="37" height="205" fill="none" stroke="#666" stroke-width="0.8"/>
<line x1="968" y1="256" x2="968" y2="455" stroke="#888" stroke-width="0.6" stroke-dasharray="4,3"/>
<rect x="957" y="275" width="33" height="16" fill="#fff" stroke="#666" stroke-width="0.7"/>
<circle cx="972" cy="283" r="5" fill="#fff" stroke="#555" stroke-width="0.8"/><circle cx="972" cy="283" r="2.5" fill="#bbb"/>
<rect x="957" y="293" width="33" height="16" fill="#fff" stroke="#666" stroke-width="0.7"/>
<circle cx="964" cy="301" r="4" fill="#fff" stroke="#555" stroke-width="0.8"/><circle cx="976" cy="301" r="4" fill="#fff" stroke="#555" stroke-width="0.8"/>
<rect x="957" y="312" width="33" height="16" fill="#fff" stroke="#666" stroke-width="0.7"/>
<circle cx="972" cy="320" r="5" fill="#fff" stroke="#555" stroke-width="0.8"/><circle cx="972" cy="320" r="2.5" fill="#bbb"/>
<rect x="956" y="362" width="29" height="50" fill="#fff" stroke="#666" stroke-width="0.7"/>
<rect x="959" y="366" width="23" height="20" fill="#fff" stroke="#888" stroke-width="0.6"/>
<rect x="959" y="389" width="23" height="20" fill="#fff" stroke="#888" stroke-width="0.6"/>
<path d="M908,505 A45,45 0 0 0 952,469" stroke="#777" stroke-width="0.6" fill="none" stroke-dasharray="3,2"/>
<path d="M462,397 L575,397 C586,397 590,404 589,415 C586,440 586,470 589,488 C590,500 584,505 572,505 L462,505 Z" fill="#fff"/>
<path d="M462,372 C462,352 470,348 480,348 C492,350 495,368 503,397 L462,397 Z" fill="#fff"/>
<path d="M462,505 L502,505 C500,525 490,545 478,545 C466,545 462,530 462,515 Z" fill="#fff"/>
<rect x="459" y="341" width="3" height="234" fill="#fff" />
<rect x="474" y="398" width="24" height="52" fill="none" stroke="#888" stroke-width="0.6"/>
<rect x="474" y="451" width="24" height="52" fill="none" stroke="#888" stroke-width="0.6"/>
<path d="M498,400 C512,420 512,480 498,503 M509,398 C520,430 522,470 509,505" stroke="#999" stroke-width="0.6" fill="none"/>
<circle cx="500" cy="500" r="14" fill="url(#lamp)"/><circle cx="500" cy="500" r="5" fill="#f5e6b0" stroke="#c9b27a" stroke-width="0.6"/>
<line x1="500" y1="505" x2="493" y2="545" stroke="#444" stroke-width="0.6" />
<path d="M459,569 q1.5,-4.5 3,0 t3,0 t3,0 t3,0 t3,0 t3,0 t3,0 t3,0 t3,0 t3,0 t3,0 t3,0 t3,0 t3,0 t3,0" stroke="#333" stroke-width="0.7" fill="none"/>
<path d="M459,572.2 q1.5,-4.5 3,0 t3,0 t3,0 t3,0 t3,0 t3,0 t3,0 t3,0 t3,0 t3,0 t3,0 t3,0 t3,0 t3,0 t3,0" stroke="#666" stroke-width="0.7" fill="none"/>
<path d="M590,569 q1.5,-4.5 3,0 t3,0 t3,0 t3,0 t3,0 t3,0 t3,0 t3,0 t3,0 t3,0 t3,0 t3,0 t3,0 t3,0 t3,0 t3,0 t3,0 t3,0 t3,0" stroke="#333" stroke-width="0.7" fill="none"/>
<path d="M590,572.2 q1.5,-4.5 3,0 t3,0 t3,0 t3,0 t3,0 t3,0 t3,0 t3,0 t3,0 t3,0 t3,0 t3,0 t3,0 t3,0 t3,0 t3,0 t3,0 t3,0 t3,0" stroke="#666" stroke-width="0.7" fill="none"/>
<path d="M679,569 q1.5,-4.5 3,0 t3,0 t3,0 t3,0 t3,0 t3,0 t3,0 t3,0 t3,0 t3,0 t3,0 t3,0 t3,0 t3,0 t3,0 t3,0 t3,0 t3,0" stroke="#333" stroke-width="0.7" fill="none"/>
<path d="M679,572.2 q1.5,-4.5 3,0 t3,0 t3,0 t3,0 t3,0 t3,0 t3,0 t3,0 t3,0 t3,0 t3,0 t3,0 t3,0 t3,0 t3,0 t3,0 t3,0 t3,0" stroke="#666" stroke-width="0.7" fill="none"/>
<path d="M827,569 q1.5,-4.5 3,0 t3,0 t3,0 t3,0 t3,0 t3,0 t3,0 t3,0 t3,0 t3,0 t3,0 t3,0 t3,0 t3,0 t3,0 t3,0 t3,0" stroke="#333" stroke-width="0.7" fill="none"/>
<path d="M827,572.2 q1.5,-4.5 3,0 t3,0 t3,0 t3,0 t3,0 t3,0 t3,0 t3,0 t3,0 t3,0 t3,0 t3,0 t3,0 t3,0 t3,0 t3,0 t3,0" stroke="#666" stroke-width="0.7" fill="none"/>
<rect x="653" y="416" width="8" height="68" fill="#fff" stroke="#777" stroke-width="0.6"/>
<rect x="669" y="416" width="8" height="68" fill="#fff" stroke="#777" stroke-width="0.6"/>
<path d="M778,378 L810,392 L812,425 L816,470 L822,532 L766,542 L744,505 L730,470 L740,402 Z" fill="#7d7d7d"/>
<circle cx="772" cy="362" r="9.3" fill="#262a36"/>
<circle cx="790" cy="360" r="9.3" fill="#262a36"/>
<circle cx="765" cy="380" r="9.3" fill="#262a36"/>
<circle cx="784" cy="377" r="9.3" fill="#262a36"/>
<circle cx="802" cy="374" r="9.3" fill="#262a36"/>
<circle cx="820" cy="380" r="9.3" fill="#262a36"/>
<circle cx="731" cy="393" r="9.3" fill="#262a36"/>
<circle cx="749" cy="391" r="9.3" fill="#262a36"/>
<circle cx="777" cy="392" r="9.3" fill="#262a36"/>
<circle cx="795" cy="391" r="9.3" fill="#262a36"/>
<circle cx="813" cy="396" r="9.3" fill="#262a36"/>
<circle cx="725" cy="410" r="9.3" fill="#262a36"/>
<circle cx="742" cy="408" r="9.3" fill="#262a36"/>
<circle cx="761" cy="405" r="9.3" fill="#262a36"/>
<circle cx="801" cy="408" r="9.3" fill="#262a36"/>
<circle cx="736" cy="424" r="9.3" fill="#262a36"/>
<circle cx="810" cy="422" r="9.3" fill="#262a36"/>
<circle cx="737" cy="441" r="9.3" fill="#262a36"/>
<circle cx="817" cy="433" r="9.3" fill="#262a36"/>
<circle cx="730" cy="457" r="9.3" fill="#262a36"/>
<circle cx="821" cy="447" r="9.3" fill="#262a36"/>
<circle cx="716" cy="472" r="9.3" fill="#262a36"/>
<circle cx="738" cy="473" r="9.3" fill="#262a36"/>
<circle cx="814" cy="472" r="9.3" fill="#262a36"/>
<circle cx="728" cy="486" r="9.3" fill="#262a36"/>
<circle cx="746" cy="492" r="9.3" fill="#262a36"/>
<circle cx="769" cy="496" r="9.3" fill="#262a36"/>
<circle cx="790" cy="492" r="9.3" fill="#262a36"/>
<circle cx="808" cy="488" r="9.3" fill="#262a36"/>
<circle cx="739" cy="509" r="9.3" fill="#262a36"/>
<circle cx="758" cy="505" r="9.3" fill="#262a36"/>
<circle cx="777" cy="501" r="9.3" fill="#262a36"/>
<circle cx="803" cy="506" r="9.3" fill="#262a36"/>
<circle cx="751" cy="522" r="9.3" fill="#262a36"/>
<circle cx="817" cy="515" r="9.3" fill="#262a36"/>
<circle cx="832" cy="528" r="9.3" fill="#262a36"/>
<circle cx="808" cy="526" r="9.3" fill="#262a36"/>
<circle cx="817" cy="539" r="9.3" fill="#262a36"/>
<circle cx="756" cy="428" r="9.3" fill="#262a36"/>
<circle cx="776" cy="420" r="9.3" fill="#262a36"/>
<circle cx="795" cy="415" r="9.3" fill="#262a36"/>
<circle cx="750" cy="450" r="9.3" fill="#262a36"/>
<circle cx="800" cy="455" r="9.3" fill="#262a36"/>
<circle cx="820" cy="460" r="9.3" fill="#262a36"/>
<circle cx="760" cy="470" r="9.3" fill="#262a36"/>
<circle cx="780" cy="478" r="9.3" fill="#262a36"/>
<circle cx="797" cy="474" r="9.3" fill="#262a36"/>
<circle cx="745" cy="538" r="9.3" fill="#262a36"/>
<circle cx="760" cy="548" r="9.3" fill="#262a36"/>
<circle cx="800" cy="548" r="9.3" fill="#262a36"/>
<circle cx="838" cy="546" r="9.3" fill="#262a36"/>
<circle cx="758" cy="382" r="3" fill="#888"/>
<circle cx="806" cy="392" r="3" fill="#888"/>
<circle cx="741" cy="417" r="3" fill="#888"/>
<circle cx="760" cy="432" r="3" fill="#888"/>
<circle cx="808" cy="439" r="3" fill="#888"/>
<circle cx="727" cy="463" r="3" fill="#888"/>
<circle cx="750" cy="487" r="3" fill="#888"/>
<circle cx="795" cy="500" r="3" fill="#888"/>
<circle cx="812" cy="462" r="3" fill="#888"/>
<circle cx="770" cy="515" r="3" fill="#888"/>
<circle cx="782" cy="540" r="3" fill="#888"/>
<path d="M840,385 C868,385 880,420 880,455 C880,495 865,516 845,516 C820,516 814,495 825,470 C832,452 826,440 818,425 C810,405 820,385 840,385 Z" fill="#fff" stroke="#444" stroke-width="0.8"/>
<path d="M858,400 C872,420 874,470 860,505" stroke="#666" stroke-width="0.6" fill="none"/>
<circle cx="840" cy="362" r="15" fill="#fff" stroke="#444" stroke-width="0.8"/>
<path d="M778,400 C798,398 806,415 805,440 C804,462 795,475 778,475 C760,475 752,460 753,438 C754,415 762,402 778,400 Z" fill="#fdfaf0" stroke="#c9c2a8" stroke-width="0.6"/>
<path d="M752,440 C772,436 790,452 790,472 C790,490 776,494 762,492 C744,490 737,478 737,464 C737,450 742,442 752,440 Z" fill="#fdfaf0" stroke="#c9c2a8" stroke-width="0.6"/>
<circle cx="772" cy="455" r="30" fill="url(#lamp)" opacity="0.85"/><circle cx="772" cy="455" r="12.5" fill="none" stroke="#d6c893" stroke-width="0.8"/>
<line x1="770" y1="456" x2="845" y2="545" stroke="#777" stroke-width="0.8" />
<rect x="835" y="535" width="12" height="18" fill="#fff" stroke="#555" stroke-width="0.7" transform="rotate(-40,841,544)"/>
<circle cx="800" cy="450" r="6" fill="none" stroke="#777" stroke-width="1.5"/><path d="M788,450 L812,450 M800,438 L800,462" stroke="#777" stroke-width="1.2"/>
<circle cx="776" cy="534" r="28" fill="#fff" stroke="#444" stroke-width="0.9"/>
<path d="M758,540 C770,530 784,530 795,540 C784,550 770,550 758,540 Z" fill="none" stroke="#555" stroke-width="0.6"/>
<rect x="799" y="622" width="22" height="20" fill="#fff"/><circle cx="810" cy="632" r="10.5" fill="#6f8a55" stroke="#3f5530" stroke-width="1"/>
<text x="415" y="307.6" font-size="13.3" fill="#2a2a2a" text-anchor="middle" textLength="40" lengthAdjust="spacingAndGlyphs" font-family="Liberation Serif">卫生间</text>
<text x="415" y="318.2" font-size="9" fill="#2a2a2a" text-anchor="middle" textLength="44.7" lengthAdjust="spacingAndGlyphs">BATHROOM</text>
<text x="503" y="304.8" font-size="13.3" fill="#e6e6ea" text-anchor="middle" textLength="40" lengthAdjust="spacingAndGlyphs" font-family="Liberation Serif">衣帽间</text>
<text x="503" y="315.7" font-size="9" fill="#e6e6ea" text-anchor="middle" textLength="50" lengthAdjust="spacingAndGlyphs">CLOTHROOM</text>
<text x="627" y="260.6" font-size="12.5" fill="#2a2a2a" text-anchor="middle" textLength="25" lengthAdjust="spacingAndGlyphs" font-family="Liberation Serif">玄关</text>
<text x="627" y="270.6" font-size="8.5" fill="#2a2a2a" text-anchor="middle" textLength="23" lengthAdjust="spacingAndGlyphs">FOYER</text>
<text x="785" y="260.7" font-size="13" fill="#2a2a2a" text-anchor="middle" textLength="26" lengthAdjust="spacingAndGlyphs" font-family="Liberation Serif">餐厅</text>
<text x="785" y="270.6" font-size="8.5" fill="#2a2a2a" text-anchor="middle" textLength="54.5" lengthAdjust="spacingAndGlyphs">DINING ROOM</text>
<text x="928" y="342.9" font-size="13" fill="#2a2a2a" text-anchor="middle" textLength="26" lengthAdjust="spacingAndGlyphs" font-family="Liberation Serif">厨房</text>
<text x="928" y="354.6" font-size="8.5" fill="#2a2a2a" text-anchor="middle" textLength="34" lengthAdjust="spacingAndGlyphs">KITCHEN</text>
<text x="543" y="447.7" font-size="13.5" fill="#2a2a2a" text-anchor="middle" textLength="27" lengthAdjust="spacingAndGlyphs" font-family="Liberation Serif">卧室</text>
<text x="543" y="459.2" font-size="9" fill="#2a2a2a" text-anchor="middle" textLength="40" lengthAdjust="spacingAndGlyphs">BEDROOM</text>
<text x="706" y="450.7" font-size="13.5" fill="#2a2a2a" text-anchor="middle" textLength="27" lengthAdjust="spacingAndGlyphs" font-family="Liberation Serif">客厅</text>
<text x="706" y="462.8" font-size="8.5" fill="#2a2a2a" text-anchor="middle" textLength="52" lengthAdjust="spacingAndGlyphs">LIVING ROOM</text>
<text x="950" y="499.6" font-size="12.8" fill="#2a2a2a" text-anchor="middle" textLength="25.6" lengthAdjust="spacingAndGlyphs" font-family="Liberation Serif">阳台</text>
<text x="950" y="511.9" font-size="8.5" fill="#2a2a2a" text-anchor="middle" textLength="36" lengthAdjust="spacingAndGlyphs">BALCONY</text>
<text x="672" y="624.6" font-size="13" fill="#2a2a2a" text-anchor="middle" textLength="25" lengthAdjust="spacingAndGlyphs" font-family="Liberation Serif">阳台</text>
<text x="672" y="635.1" font-size="8.5" fill="#2a2a2a" text-anchor="middle" textLength="35.7" lengthAdjust="spacingAndGlyphs">BALCONY</text>
</svg>

<!-- right dock -->
<div class="a" style="left:1315px;top:59px;width:285px;height:13px;background:#424242"></div>
<svg class="a" style="left:1338px;top:62px" width="10" height="8"><path d="M4,1 L1,4 L4,7 M8,1 L5,4 L8,7" stroke="#c8c8c8" stroke-width="1.2" fill="none"/></svg>
<svg class="a" style="left:1585px;top:62px" width="10" height="8"><path d="M1,1 L4,4 L1,7 M5,1 L8,4 L5,7" stroke="#c8c8c8" stroke-width="1.2" fill="none"/></svg>
<div class="a" style="left:1315px;top:72px;width:37px;height:828px;background:#535353;"></div>
<div class="a" style="left:1352px;top:72px;width:3px;height:828px;background:#3c3c3c;"></div>
<div class="a" style="left:1315px;top:71px;width:37px;height:2px;background:#3c3c3c;"></div>
<div class="a" style="left:1315px;top:139px;width:37px;height:2px;background:#3c3c3c;"></div>
<div class="a" style="left:1315px;top:180px;width:37px;height:2px;background:#3c3c3c;"></div>
<div class="a" style="left:1315px;top:250px;width:37px;height:2px;background:#3c3c3c;"></div>
<div class="a" style="left:1315px;top:290px;width:37px;height:2px;background:#3c3c3c;"></div>
<div class="a" style="left:1315px;top:359px;width:37px;height:2px;background:#3c3c3c;"></div>
<div class="a" style="left:1315px;top:400px;width:37px;height:2px;background:#3c3c3c;"></div>
<svg class="a" style="left:1323px;top:76px" width="22" height="4"><rect x="0.0" y="0" width="1" height="4" fill="#3e3e3e"/><rect x="2.2" y="0" width="1" height="4" fill="#3e3e3e"/><rect x="4.4" y="0" width="1" height="4" fill="#3e3e3e"/><rect x="6.6" y="0" width="1" height="4" fill="#3e3e3e"/><rect x="8.8" y="0" width="1" height="4" fill="#3e3e3e"/><rect x="11.0" y="0" width="1" height="4" fill="#3e3e3e"/><rect x="13.2" y="0" width="1" height="4" fill="#3e3e3e"/><rect x="15.4" y="0" width="1" height="4" fill="#3e3e3e"/><rect x="17.6" y="0" width="1" height="4" fill="#3e3e3e"/><rect x="19.8" y="0" width="1" height="4" fill="#3e3e3e"/></svg>
<svg class="a" style="left:1323px;top:144px" width="22" height="4"><rect x="0.0" y="0" width="1" height="4" fill="#3e3e3e"/><rect x="2.2" y="0" width="1" height="4" fill="#3e3e3e"/><rect x="4.4" y="0" width="1" height="4" fill="#3e3e3e"/><rect x="6.6" y="0" width="1" height="4" fill="#3e3e3e"/><rect x="8.8" y="0" width="1" height="4" fill="#3e3e3e"/><rect x="11.0" y="0" width="1" height="4" fill="#3e3e3e"/><rect x="13.2" y="0" width="1" height="4" fill="#3e3e3e"/><rect x="15.4" y="0" width="1" height="4" fill="#3e3e3e"/><rect x="17.6" y="0" width="1" height="4" fill="#3e3e3e"/><rect x="19.8" y="0" width="1" height="4" fill="#3e3e3e"/></svg>
<svg class="a" style="left:1323px;top:185px" width="22" height="4"><rect x="0.0" y="0" width="1" height="4" fill="#3e3e3e"/><rect x="2.2" y="0" width="1" height="4" fill="#3e3e3e"/><rect x="4.4" y="0" width="1" height="4" fill="#3e3e3e"/><rect x="6.6" y="0" width="1" height="4" fill="#3e3e3e"/><rect x="8.8" y="0" width="1" height="4" fill="#3e3e3e"/><rect x="11.0" y="0" width="1" height="4" fill="#3e3e3e"/><rect x="13.2" y="0" width="1" height="4" fill="#3e3e3e"/><rect x="15.4" y="0" width="1" height="4" fill="#3e3e3e"/><rect x="17.6" y="0" width="1" height="4" fill="#3e3e3e"/><rect x="19.8" y="0" width="1" height="4" fill="#3e3e3e"/></svg>
<svg class="a" style="left:1323px;top:255px" width="22" height="4"><rect x="0.0" y="0" width="1" height="4" fill="#3e3e3e"/><rect x="2.2" y="0" width="1" height="4" fill="#3e3e3e"/><rect x="4.4" y="0" width="1" height="4" fill="#3e3e3e"/><rect x="6.6" y="0" width="1" height="4" fill="#3e3e3e"/><rect x="8.8" y="0" width="1" height="4" fill="#3e3e3e"/><rect x="11.0" y="0" width="1" height="4" fill="#3e3e3e"/><rect x="13.2" y="0" width="1" height="4" fill="#3e3e3e"/><rect x="15.4" y="0" width="1" height="4" fill="#3e3e3e"/><rect x="17.6" y="0" width="1" height="4" fill="#3e3e3e"/><rect x="19.8" y="0" width="1" height="4" fill="#3e3e3e"/></svg>
<svg class="a" style="left:1323px;top:295px" width="22" height="4"><rect x="0.0" y="0" width="1" height="4" fill="#3e3e3e"/><rect x="2.2" y="0" width="1" height="4" fill="#3e3e3e"/><rect x="4.4" y="0" width="1" height="4" fill="#3e3e3e"/><rect x="6.6" y="0" width="1" height="4" fill="#3e3e3e"/><rect x="8.8" y="0" width="1" height="4" fill="#3e3e3e"/><rect x="11.0" y="0" width="1" height="4" fill="#3e3e3e"/><rect x="13.2" y="0" width="1" height="4" fill="#3e3e3e"/><rect x="15.4" y="0" width="1" height="4" fill="#3e3e3e"/><rect x="17.6" y="0" width="1" height="4" fill="#3e3e3e"/><rect x="19.8" y="0" width="1" height="4" fill="#3e3e3e"/></svg>
<svg class="a" style="left:1323px;top:364px" width="22" height="4"><rect x="0.0" y="0" width="1" height="4" fill="#3e3e3e"/><rect x="2.2" y="0" width="1" height="4" fill="#3e3e3e"/><rect x="4.4" y="0" width="1" height="4" fill="#3e3e3e"/><rect x="6.6" y="0" width="1" height="4" fill="#3e3e3e"/><rect x="8.8" y="0" width="1" height="4" fill="#3e3e3e"/><rect x="11.0" y="0" width="1" height="4" fill="#3e3e3e"/><rect x="13.2" y="0" width="1" height="4" fill="#3e3e3e"/><rect x="15.4" y="0" width="1" height="4" fill="#3e3e3e"/><rect x="17.6" y="0" width="1" height="4" fill="#3e3e3e"/><rect x="19.8" y="0" width="1" height="4" fill="#3e3e3e"/></svg>
<svg class="a" style="left:1324px;top:85px" width="20" height="20"><rect x="2" y="2" width="5" height="5" fill="none" stroke="#dadada" stroke-width="1.2"/><rect x="2" y="8" width="5" height="5" fill="none" stroke="#dadada" stroke-width="1.2"/><rect x="2" y="14" width="5" height="5" fill="#dadada"/><path d="M11,5 Q17,3 16,10 Q15,15 11,17" stroke="#dadada" stroke-width="1.3" fill="none"/><path d="M9,3 l3,-2 1,3z" fill="#dadada"/></svg>
<svg class="a" style="left:1324px;top:114px" width="20" height="20"><path d="M4,3 L17,10 L4,17Z" fill="#dadada"/></svg>
<svg class="a" style="left:1324px;top:154px" width="20" height="20"><path d="M2,5 L7,3 L12,5 V11 L7,13 L2,11Z" fill="none" stroke="#dadada" stroke-width="1.2"/><rect x="14" y="3" width="4" height="4" fill="#dadada"/><rect x="14" y="9" width="4" height="4" fill="#dadada"/><rect x="2" y="15" width="16" height="4" fill="#dadada"/></svg>
<svg class="a" style="left:1324px;top:195px" width="20" height="20"><rect x="6" y="11" width="9" height="8" fill="#dadada"/><path d="M8,11 L5,3 M10.5,11 V2 M13,11 L16,4" stroke="#dadada" stroke-width="2"/></svg>
<svg class="a" style="left:1324px;top:223px" width="20" height="20"><path d="M2,4 H10 M2,9 H13 M2,15 H10" stroke="#dadada" stroke-width="1.6"/><circle cx="8" cy="4" r="3" fill="#dadada"/><path d="M12,15 L18,11 V19Z" fill="#dadada"/></svg>
<svg class="a" style="left:1324px;top:263px" width="20" height="20"><path d="M1,3 H4 M1,6 H4 M1,9 H4 M6,3 H9 M6,6 H9" stroke="#dadada" stroke-width="1"/><circle cx="12" cy="6" r="3" fill="#dadada"/><path d="M10,9 h4 v3 h5 v3 h-14 v-3 h5z M5,17 h14 v1.6 h-14z" fill="#dadada"/></svg>
<svg class="a" style="left:1324px;top:305px" width="20" height="20"><text x="2" y="17" font-size="16" fill="#dadada" font-family="Liberation Sans">A</text><rect x="14" y="3" width="1.2" height="15" fill="#dadada"/></svg>
<svg class="a" style="left:1324px;top:333px" width="20" height="20"><path d="M9,3 H16 M12,3 V18 M15,3 V18" stroke="#dadada" stroke-width="1.4"/><path d="M9,3 A4,4 0 0 0 9,11 H12 V3Z" fill="#dadada"/></svg>
<svg class="a" style="left:1324px;top:374px" width="20" height="20"><path d="M10,2 L17,6 V14 L10,18 L3,14 V6Z M3,6 L10,10 L17,6 M10,10 V18" fill="none" stroke="#dadada" stroke-width="1.3"/></svg>
<div class="a" style="left:1355px;top:72px;width:245px;height:28px;background:#424242;"></div>
<div class="a" style="left:1355px;top:72px;width:51px;height:28px;background:#535353;"></div>
<div class="a" style="left:1406px;top:72px;width:1px;height:28px;background:#3a3a3a;"></div>
<div class="a" style="left:1447px;top:72px;width:1px;height:28px;background:#3a3a3a;"></div>
<div class="t" style="left:1365px;top:80px;font-size:12px;color:#ececec;">直方图</div>
<div class="t" style="left:1416px;top:80px;font-size:12px;color:#a9a9a9;">信息</div>
<svg class="a" style="left:1582px;top:81px" width="12" height="9"><path d="M0,1 H11 M0,3.5 H11 M0,6 H11 M0,8.5 H11" stroke="#c8c8c8" stroke-width="1"/></svg>
<div class="a" style="left:1355px;top:100px;width:245px;height:97px;background:#535353;"></div>
<div class="a" style="left:1359px;top:109px;width:198px;height:84px;background:#424242;border:1px solid #3a3a3a"></div>
<svg class="a" style="left:0;top:0" width="1600" height="900" viewBox="0 0 1600 900"><path d="M1361,192 L1361,192 L1362,192 L1362,192 L1363,192 L1363,192 L1364,192 L1364,192 L1365,192 L1365,192 L1366,192 L1366,192 L1367,192 L1367,192 L1368,192 L1368,192 L1369,192 L1369,192 L1370,192 L1370,192 L1371,192 L1371,192 L1372,192 L1372,192 L1373,192 L1373,192 L1374,192 L1374,192 L1375,192 L1375,192 L1376,192 L1376,192 L1377,192 L1377,192 L1378,192 L1378,192 L1379,192 L1379,192 L1380,192 L1380,192 L1381,192 L1381,192 L1382,192 L1382,192 L1383,192 L1383,192 L1384,192 L1384,192 L1385,192 L1385,192 L1386,192 L1386,192 L1387,192 L1387,192 L1388,192 L1388,192 L1389,192 L1389,192 L1390,192 L1390,191 L1391,191 L1391,191 L1392,191 L1392,190 L1393,190 L1393,191 L1394,191 L1394,191 L1395,191 L1395,191 L1396,191 L1396,191 L1397,191 L1397,190 L1398,190 L1398,191 L1399,191 L1399,190 L1400,190 L1400,191 L1401,191 L1401,191 L1402,191 L1402,191 L1403,191 L1403,190 L1404,190 L1404,191 L1405,191 L1405,190 L1406,190 L1406,190 L1407,190 L1407,191 L1408,191 L1408,191 L1409,191 L1409,192 L1410,192 L1410,191 L1411,191 L1411,191 L1412,191 L1412,191 L1413,191 L1413,192 L1414,192 L1414,190 L1415,190 L1415,191 L1416,191 L1416,190 L1417,190 L1417,190 L1418,190 L1418,192 L1419,192 L1419,190 L1420,190 L1420,191 L1421,191 L1421,191 L1422,191 L1422,190 L1423,190 L1423,190 L1424,190 L1424,190 L1425,190 L1425,190 L1426,190 L1426,191 L1427,191 L1427,190 L1428,190 L1428,192 L1429,192 L1429,191 L1430,191 L1430,190 L1431,190 L1431,192 L1432,192 L1432,192 L1433,192 L1433,192 L1434,192 L1434,191 L1435,191 L1435,191 L1436,191 L1436,190 L1437,190 L1437,192 L1438,192 L1438,191 L1439,191 L1439,191 L1440,191 L1440,191 L1441,191 L1441,191 L1442,191 L1442,190 L1443,190 L1443,191 L1444,191 L1444,191 L1445,191 L1445,190 L1446,190 L1446,191 L1447,191 L1447,190 L1448,190 L1448,191 L1449,191 L1449,191 L1450,191 L1450,192 L1451,192 L1451,192 L1452,192 L1452,190 L1453,190 L1453,190 L1454,190 L1454,190 L1455,190 L1455,189 L1456,189 L1456,192 L1457,192 L1457,190 L1458,190 L1458,190 L1459,190 L1459,191 L1460,191 L1460,189 L1461,189 L1461,190 L1462,190 L1462,192 L1463,192 L1463,192 L1464,192 L1464,189 L1465,189 L1465,192 L1466,192 L1466,190 L1467,190 L1467,192 L1468,192 L1468,190 L1469,190 L1469,190 L1470,190 L1470,192 L1471,192 L1471,192 L1472,192 L1472,192 L1473,192 L1473,191 L1474,191 L1474,191 L1475,191 L1475,189 L1476,189 L1476,186 L1477,186 L1477,186 L1478,186 L1478,184 L1479,184 L1479,186 L1480,186 L1480,186 L1481,186 L1481,189 L1482,189 L1482,185 L1483,185 L1483,184 L1484,184 L1484,188 L1485,188 L1485,183 L1486,183 L1486,184 L1487,184 L1487,187 L1488,187 L1488,187 L1489,187 L1489,189 L1490,189 L1490,187 L1491,187 L1491,187 L1492,187 L1492,189 L1493,189 L1493,186 L1494,186 L1494,183 L1495,183 L1495,189 L1496,189 L1496,188 L1497,188 L1497,188 L1498,188 L1498,184 L1499,184 L1499,189 L1500,189 L1500,189 L1501,189 L1501,189 L1502,189 L1502,186 L1503,186 L1503,183 L1504,183 L1504,186 L1505,186 L1505,188 L1506,188 L1506,184 L1507,184 L1507,185 L1508,185 L1508,188 L1509,188 L1509,186 L1510,186 L1510,185 L1511,185 L1511,188 L1512,188 L1512,184 L1513,184 L1513,183 L1514,183 L1514,188 L1515,188 L1515,186 L1516,186 L1516,184 L1517,184 L1517,186 L1518,186 L1518,189 L1519,189 L1519,186 L1520,186 L1520,186 L1521,186 L1521,188 L1522,188 L1522,189 L1523,189 L1523,187 L1524,187 L1524,183 L1525,183 L1525,183 L1526,183 L1526,185 L1527,185 L1527,187 L1528,187 L1528,189 L1529,189 L1529,188 L1530,188 L1530,188 L1531,188 L1531,186 L1532,186 L1532,183 L1533,183 L1533,185 L1534,185 L1534,184 L1535,184 L1535,185 L1536,185 L1536,189 L1537,189 L1537,189 L1538,189 L1538,188 L1539,188 L1539,188 L1540,188 L1540,187 L1541,187 L1541,185 L1542,185 L1542,184 L1543,184 L1543,174 L1544,174 L1544,173 L1545,173 L1545,172 L1546,172 L1546,165 L1547,165 L1547,166 L1548,166 L1548,161 L1549,161 L1549,161 L1550,161 L1550,158 L1551,158 L1551,164 L1552,164 L1552,164 L1553,164 L1553,164 L1554,164 L1554,164 L1555,164 L1555,192 Z" fill="#f2f2f2"/><rect x="1361" y="113" width="1.2" height="79" fill="#f2f2f2"/><rect x="1450" y="113" width="1.2" height="79" fill="#f2f2f2"/><rect x="1501" y="135" width="1.2" height="57" fill="#f2f2f2"/><rect x="1554" y="113" width="1.2" height="79" fill="#f2f2f2"/><rect x="1417" y="184" width="1" height="8" fill="#f2f2f2"/><rect x="1463" y="184" width="1" height="8" fill="#f2f2f2"/><rect x="1478" y="176" width="1" height="16" fill="#f2f2f2"/><rect x="1483" y="183" width="1" height="9" fill="#f2f2f2"/><rect x="1509" y="172" width="1" height="20" fill="#f2f2f2"/><rect x="1530" y="172" width="1" height="20" fill="#f2f2f2"/><rect x="1533" y="179" width="1" height="13" fill="#f2f2f2"/><rect x="1550" y="150" width="1" height="42" fill="#f2f2f2"/><path d="M1544,117 L1550,129 L1538,129Z" fill="#d8d8d8"/><rect x="1543.3" y="120" width="1.4" height="5" fill="#424242"/><rect x="1543.3" y="126" width="1.4" height="1.4" fill="#424242"/></svg>
<div class="a" style="left:1355px;top:196px;width:245px;height:4px;background:#3c3c3c;"></div>
<div class="a" style="left:1355px;top:200px;width:245px;height:27px;background:#424242;"></div>
<div class="a" style="left:1355px;top:200px;width:38px;height:27px;background:#535353;"></div>
<div class="a" style="left:1393px;top:200px;width:1px;height:27px;background:#3a3a3a;"></div>
<div class="a" style="left:1433px;top:200px;width:1px;height:27px;background:#3a3a3a;"></div>
<div class="t" style="left:1365px;top:207px;font-size:12px;color:#ececec;">库</div>
<div class="t" style="left:1402px;top:207px;font-size:12px;color:#a9a9a9;">调整</div>
<svg class="a" style="left:1582px;top:208px" width="12" height="9"><path d="M0,1 H11 M0,3.5 H11 M0,6 H11 M0,8.5 H11" stroke="#c8c8c8" stroke-width="1"/></svg>
<div class="a" style="left:1355px;top:227px;width:245px;height:297px;background:#535353;"></div>
<div class="a" style="left:1363px;top:236px;width:171px;height:17px;background:#4a4a4a;border:1px solid #444;border-radius:2px"></div>
<svg class="a" style="left:1520px;top:241px" width="10" height="8"><path d="M1,1.5 L4.5,5 L8,1.5" stroke="#9a9a9a" fill="none" stroke-width="1"/></svg>
<div class="a" style="left:1543px;top:234px;width:21px;height:22px;background:#383838;border:1px solid #454545;border-radius:2px"></div>
<svg class="a" style="left:1547px;top:238px" width="14" height="14"><rect x="1" y="1" width="5" height="5" fill="#d8d8d8"/><rect x="7" y="1" width="5" height="5" fill="#d8d8d8"/><rect x="1" y="7" width="5" height="5" fill="#d8d8d8"/><rect x="7" y="7" width="5" height="5" fill="#d8d8d8"/></svg>
<svg class="a" style="left:1572px;top:238px" width="13" height="13"><path d="M0,1.5 H12 M0,4.5 H12 M0,7.5 H12 M0,10.5 H12" stroke="#d8d8d8" stroke-width="1.6"/></svg>
<svg class="a" style="left:1362px;top:266px" width="13" height="13"><circle cx="7.5" cy="5" r="3.8" stroke="#d0d0d0" stroke-width="1.4" fill="none"/><path d="M5,8 L1,12" stroke="#d0d0d0" stroke-width="1.8"/></svg>
<div class="t" style="left:1383px;top:267px;font-size:11px;color:#6c6c6c;">搜索 Adobe Stock</div>
<svg class="a" style="left:1578px;top:269px" width="10" height="8"><path d="M1,1.5 L4.5,5 L8,1.5" stroke="#6f6f6f" fill="none" stroke-width="1"/></svg>
<div class="a" style="left:1363px;top:283px;width:228px;height:1px;background:#5d5d5d;"></div>
<svg class="a" style="left:1450px;top:358px" width="54" height="40"><g fill="none" stroke="#767676" stroke-width="5">
<path d="M14,30 A9,9 0 0 1 10,13 A12,12 0 0 1 32,9 A9,9 0 0 1 44,18"/>
<circle cx="22" cy="22" r="6"/>
</g><path d="M33,26 L45,38 M45,26 L33,38" stroke="#767676" stroke-width="4.5"/></svg>
<div class="t" style="left:1378px;top:404px;font-size:11px;color:#9a9a9a;">初始化 Creative Cloud Libraries 时出现问</div>
<div class="t" style="left:1471px;top:419px;font-size:11px;color:#9a9a9a;">题</div>
<div class="t" style="left:1453px;top:449px;font-size:12px;color:#f0f0f0;font-weight:bold;text-decoration:underline">更多信息</div>
<div class="a" style="left:1355px;top:523px;width:245px;height:1px;background:#454545;"></div>
<div class="a" style="left:1355px;top:524px;width:245px;height:25px;background:#505050;"></div>
<svg class="a" style="left:1538px;top:529px" width="44" height="16"><g fill="none" stroke="#d0d0d0" stroke-width="1.8"><path d="M5,12 A4,4 0 0 1 4,5 A5,5 0 0 1 13,3 A4,4 0 0 1 16,8"/><circle cx="9" cy="8.5" r="2.5"/></g><path d="M13,10 L17,14 M17,10 L13,14" stroke="#d0d0d0" stroke-width="1.5"/><path d="M28,4 H38 M31,4 V2.5 H35 V4 M29.5,5 V14 H36.5 V5 M32,6.5 V12.5 M34,6.5 V12.5" stroke="#8a8a8a" stroke-width="1.1" fill="none"/></svg>
<div class="a" style="left:1355px;top:549px;width:245px;height:3px;background:#3c3c3c;"></div>
<div class="a" style="left:1355px;top:552px;width:245px;height:28px;background:#424242;"></div>
<div class="a" style="left:1355px;top:552px;width:41px;height:28px;background:#535353;"></div>
<div class="a" style="left:1396px;top:552px;width:1px;height:28px;background:#3a3a3a;"></div>
<div class="a" style="left:1437px;top:552px;width:1px;height:28px;background:#3a3a3a;"></div>
<div class="t" style="left:1365px;top:560px;font-size:12px;color:#ececec;">图层</div>
<div class="t" style="left:1406px;top:560px;font-size:12px;color:#a9a9a9;">通道</div>
<svg class="a" style="left:1582px;top:561px" width="12" height="9"><path d="M0,1 H11 M0,3.5 H11 M0,6 H11 M0,8.5 H11" stroke="#c8c8c8" stroke-width="1"/></svg>
<div class="a" style="left:1355px;top:580px;width:245px;height:320px;background:#535353;"></div>
<div class="a" style="left:1359px;top:587px;width:86px;height:20px;background:#424242;border:1px solid #3c3c3c;border-radius:2px"></div>
<svg class="a" style="left:1366px;top:591px" width="11" height="11"><circle cx="6.5" cy="4.5" r="3.3" stroke="#d6d6d6" stroke-width="1.4" fill="none"/><path d="M4.5,7 L1,10.5" stroke="#d6d6d6" stroke-width="1.7"/></svg>
<div class="t" style="left:1381px;top:591px;font-size:12px;color:#ececec;">类型</div>
<svg class="a" style="left:1432px;top:594px" width="10" height="8"><path d="M1,1.5 L4.5,5 L8,1.5" stroke="#cfcfcf" fill="none" stroke-width="1"/></svg>
<svg class="a" style="left:1458px;top:589px" width="142" height="20"><g fill="#d6d6d6" stroke="#d6d6d6">
<rect x="3.5" y="3.5" width="11" height="9" fill="none" stroke-width="1.2"/><path d="M5,11 L8,7 L10,9 L11.5,7.5 L13,11Z" stroke="none"/>
<circle cx="34" cy="8" r="5" fill="none" stroke-width="1.3"/><path d="M37.5,4.5 A5,5 0 0 1 30.5,11.5Z" stroke="none"/>
<text x="51" y="13.5" font-size="13" font-family="Liberation Serif" font-weight="bold" stroke="none">T</text>
<rect x="76.5" y="3.5" width="9" height="9" fill="none" stroke-width="1.2"/><rect x="75" y="2" width="3" height="3" stroke="none"/><rect x="84" y="2" width="3" height="3" stroke="none"/><rect x="75" y="11" width="3" height="3" stroke="none"/><rect x="84" y="11" width="3" height="3" stroke="none"/>
<path d="M101.5,2.5 H106 L109,5.5 V13 H101.5Z" fill="none" stroke-width="1.2"/><rect x="98" y="8" width="6" height="6" stroke="none"/>
</g><rect x="126" y="2" width="8" height="16" rx="4" fill="#3d3d3d" stroke="#464646"/><circle cx="130" cy="6" r="3.8" fill="#e8e8e8"/></svg>
<div class="a" style="left:1355px;top:610px;width:245px;height:1px;background:#464646;"></div>
<div class="a" style="left:1359px;top:614px;width:118px;height:20px;background:#424242;border:1px solid #3c3c3c;border-radius:2px"></div>
<div class="t" style="left:1367px;top:618px;font-size:12px;color:#f2f2f2;">正常</div>
<svg class="a" style="left:1464px;top:621px" width="10" height="8"><path d="M1,1.5 L4.5,5 L8,1.5" stroke="#cfcfcf" fill="none" stroke-width="1"/></svg>
<div class="t" style="left:1484px;top:618px;font-size:12px;color:#dedede;">不透明度:</div>
<div class="a" style="left:1540px;top:615px;width:55px;height:20px;background:#424242;border:1px solid #3c3c3c;border-radius:2px"></div>
<div class="a" style="left:1578px;top:615px;width:1px;height:20px;background:#3a3a3a;"></div>
<div class="t" style="left:1543px;top:619px;font-size:11px;color:#f2f2f2;">100%</div>
<svg class="a" style="left:1582px;top:622px" width="10" height="8"><path d="M1,1.5 L4.5,5 L8,1.5" stroke="#cfcfcf" fill="none" stroke-width="1"/></svg>
<div class="a" style="left:1355px;top:638px;width:245px;height:1px;background:#464646;"></div>
<div class="t" style="left:1362px;top:645px;font-size:12px;color:#dedede;">锁定:</div>
<svg class="a" style="left:1397px;top:643px" width="100" height="18"><g fill="#d6d6d6">
<rect x="1.5" y="3.5" width="10" height="10" fill="none" stroke="#d6d6d6" stroke-width="1"/><rect x="2" y="4" width="3" height="3"/><rect x="8" y="4" width="3" height="3"/><rect x="5" y="7" width="3" height="3"/><rect x="2" y="10" width="3" height="3"/><rect x="8" y="10" width="3" height="3"/>
<path d="M24,14 Q24,10 27,10 L36,2 L37,3 L29,12 Q29,15 24,14Z"/>
<path d="M52,2 V15 M45.5,8.5 H58.5" stroke="#d6d6d6" stroke-width="1.4"/><path d="M52,1 l-2.5,2.5 h5z M52,16 l-2.5,-2.5 h5z M45,8.5 l2.5,-2.5 v5z M59,8.5 l-2.5,-2.5 v5z"/>
<path d="M68,4 H78 V14 M71,2 V12 H81" stroke="#d6d6d6" stroke-width="1.2" fill="none"/>
<rect x="89" y="8" width="10" height="7.5" rx="1"/><path d="M91,8 V5.5 A3,3 0 0 1 97,5.5 V8" stroke="#d6d6d6" stroke-width="1.5" fill="none"/>
</g></svg>
<div class="t" style="left:1508px;top:645px;font-size:12px;color:#dedede;">填充:</div>
<div class="a" style="left:1540px;top:642px;width:55px;height:20px;background:#424242;border:1px solid #3c3c3c;border-radius:2px"></div>
<div class="a" style="left:1578px;top:642px;width:1px;height:20px;background:#3a3a3a;"></div>
<div class="t" style="left:1543px;top:646px;font-size:11px;color:#f2f2f2;">100%</div>
<svg class="a" style="left:1582px;top:649px" width="10" height="8"><path d="M1,1.5 L4.5,5 L8,1.5" stroke="#cfcfcf" fill="none" stroke-width="1"/></svg>
<div class="a" style="left:1355px;top:665px;width:245px;height:1px;background:#464646;"></div>
<div class="a" style="left:1355px;top:693px;width:230px;height:1px;background:#434343;"></div>
<svg class="a" style="left:1362px;top:670px" width="17" height="12"><path d="M1,6 Q8.5,-2 16,6 Q8.5,14 1,6Z" fill="#dcdcdc"/><circle cx="8.5" cy="6" r="3" fill="#535353"/><circle cx="8.5" cy="6" r="1.6" fill="#dcdcdc"/></svg>
<div class="t" style="left:1413px;top:666px;font-size:20px;color:#dcdcdc;font-family:'Liberation Serif',serif">T</div>
<div class="t" style="left:1447px;top:669.5px;font-size:12px;color:#ececec;">衣帽间</div>
<div class="a" style="left:1355px;top:732px;width:230px;height:1px;background:#434343;"></div>
<svg class="a" style="left:1362px;top:708px" width="17" height="12"><path d="M1,6 Q8.5,-2 16,6 Q8.5,14 1,6Z" fill="#dcdcdc"/><circle cx="8.5" cy="6" r="3" fill="#535353"/><circle cx="8.5" cy="6" r="1.6" fill="#dcdcdc"/></svg>
<div class="t" style="left:1413px;top:704px;font-size:20px;color:#dcdcdc;font-family:'Liberation Serif',serif">T</div>
<div class="t" style="left:1447px;top:707.5px;font-size:12px;color:#ececec;transform:scaleX(0.86);transform-origin:0 0">CLOTHROOM</div>
<div class="a" style="left:1355px;top:771px;width:230px;height:1px;background:#434343;"></div>
<svg class="a" style="left:1362px;top:746px" width="17" height="12"><path d="M1,6 Q8.5,-2 16,6 Q8.5,14 1,6Z" fill="#dcdcdc"/><circle cx="8.5" cy="6" r="3" fill="#535353"/><circle cx="8.5" cy="6" r="1.6" fill="#dcdcdc"/></svg>
<div class="t" style="left:1413px;top:742px;font-size:20px;color:#dcdcdc;font-family:'Liberation Serif',serif">T</div>
<div class="t" style="left:1447px;top:746.5px;font-size:12px;color:#ececec;">卫生间</div>
<div class="a" style="left:1355px;top:810px;width:230px;height:1px;background:#434343;"></div>
<svg class="a" style="left:1362px;top:786px" width="17" height="12"><path d="M1,6 Q8.5,-2 16,6 Q8.5,14 1,6Z" fill="#dcdcdc"/><circle cx="8.5" cy="6" r="3" fill="#535353"/><circle cx="8.5" cy="6" r="1.6" fill="#dcdcdc"/></svg>
<div class="t" style="left:1413px;top:782px;font-size:20px;color:#dcdcdc;font-family:'Liberation Serif',serif">T</div>
<div class="t" style="left:1447px;top:785.5px;font-size:12px;color:#ececec;transform:scaleX(0.86);transform-origin:0 0">BATHROOM</div>
<div class="a" style="left:1355px;top:849px;width:230px;height:1px;background:#434343;"></div>
<svg class="a" style="left:1362px;top:824px" width="17" height="12"><path d="M1,6 Q8.5,-2 16,6 Q8.5,14 1,6Z" fill="#dcdcdc"/><circle cx="8.5" cy="6" r="3" fill="#535353"/><circle cx="8.5" cy="6" r="1.6" fill="#dcdcdc"/></svg>
<div class="t" style="left:1413px;top:820px;font-size:20px;color:#dcdcdc;font-family:'Liberation Serif',serif">T</div>
<div class="t" style="left:1447px;top:824.5px;font-size:12px;color:#ececec;">卧室</div>
<div class="a" style="left:1355px;top:877px;width:230px;height:1px;background:#434343;"></div>
<svg class="a" style="left:1362px;top:864px" width="17" height="12"><path d="M1,6 Q8.5,-2 16,6 Q8.5,14 1,6Z" fill="#dcdcdc"/><circle cx="8.5" cy="6" r="3" fill="#535353"/><circle cx="8.5" cy="6" r="1.6" fill="#dcdcdc"/></svg>
<div class="t" style="left:1413px;top:860px;font-size:20px;color:#dcdcdc;font-family:'Liberation Serif',serif">T</div>
<div class="t" style="left:1447px;top:864px;font-size:12px;color:#ececec;transform:scaleX(0.86);transform-origin:0 0">BEDROOM</div>
<div class="a" style="left:1385px;top:666px;width:1px;height:212px;background:#434343;"></div>
<div class="a" style="left:1585px;top:666px;width:15px;height:212px;background:#4c4c4c;"></div>
<svg class="a" style="left:1587px;top:672px" width="10" height="8"><path d="M1,5.5 L4.5,2 L8,5.5" stroke="#8a8a8a" fill="none" stroke-width="1"/></svg>
<div class="a" style="left:1587px;top:691px;width:11px;height:27px;background:#6a6a6a;"></div>
<svg class="a" style="left:1587px;top:864px" width="10" height="8"><path d="M1,1.5 L4.5,5 L8,1.5" stroke="#8a8a8a" fill="none" stroke-width="1"/></svg>
<div class="a" style="left:1355px;top:878px;width:245px;height:1px;background:#3f3f3f;"></div>
<svg class="a" style="left:1390px;top:880px" width="190" height="20"><g fill="#dcdcdc" stroke="#dcdcdc">
<path d="M6,5.5 H10 A3,3 0 0 1 10,11.5 H6 A3,3 0 0 1 6,5.5Z M9,8.5 H16 M15,5.5 H19 A3,3 0 0 1 19,11.5 H15" fill="none" stroke="#8e8e8e" stroke-width="1.3"/>
<text x="34" y="14" font-size="14" font-style="italic" font-family="Liberation Serif" stroke="none">fx</text>
<rect x="61" y="3" width="12" height="10" stroke="none"/><circle cx="67" cy="8" r="3" fill="#535353" stroke="none"/>
<circle cx="94" cy="8.5" r="5" fill="none" stroke-width="1.3"/><path d="M97.5,5 A5,5 0 0 1 90.5,12Z" stroke="none"/>
<path d="M115,4 H120 L121.5,5.5 H128 V13 H115Z" stroke="none"/>
<path d="M142.5,4.5 H151 V13 H146 L142.5,9.5Z" fill="none" stroke-width="1.2"/>
<path d="M169,4.5 H181 M172,4.5 V3 H178 V4.5 M170.5,5.5 V14 H179.5 V5.5 M173.5,7 V12.5 M176.5,7 V12.5" fill="none" stroke-width="1.2"/>
</g></svg>

<!-- selection frame -->
<svg class="a" style="left:4px;top:32px" width="6" height="22"><rect x="1" y="0.0" width="4" height="1" fill="#3a3a3a"/><rect x="1" y="2.6" width="4" height="1" fill="#3a3a3a"/><rect x="1" y="5.2" width="4" height="1" fill="#3a3a3a"/><rect x="1" y="7.8" width="4" height="1" fill="#3a3a3a"/><rect x="1" y="10.4" width="4" height="1" fill="#3a3a3a"/><rect x="1" y="13.0" width="4" height="1" fill="#3a3a3a"/><rect x="1" y="15.6" width="4" height="1" fill="#3a3a3a"/><rect x="1" y="18.2" width="4" height="1" fill="#3a3a3a"/></svg>
<svg class="a" style="left:20px;top:33px" width="40" height="22">
<path d="M3,19 L14,8" stroke="#dcdcdc" stroke-width="4" stroke-linecap="round"/>
<path d="M13.5,8.5 L15.5,6.5" stroke="#535353" stroke-width="1.2"/>
<path d="M9,2 l1,2.5 2.5,1 -2.5,1 -1,2.5 -1,-2.5 -2.5,-1 2.5,-1z M17,1 l1.2,3 3,1.2 -3,1.2 -1.2,3 -1.2,-3 -3,-1.2 3,-1.2z M19,10 l0.8,2 2,0.8 -2,0.8 -0.8,2 -0.8,-2 -2,-0.8 2,-0.8z" fill="#dcdcdc"/>
<path d="M26,12 L29.5,15.5 L33,12" stroke="#cfcfcf" stroke-width="1" fill="none"/>
</svg>
<div class="a" style="left:62px;top:31px;width:1px;height:24px;background:#3f3f3f"></div>
<div class="a" style="left:70px;top:30px;width:24px;height:25px;background:#383838;border:1px solid #464646;border-radius:3px"></div>
<div class="a" style="left:77px;top:37px;width:10px;height:10px;background:#d9d9d9"></div>
<svg class="a" style="left:98px;top:33px" width="75" height="20">
<rect x="3" y="2" width="9" height="9" fill="#d9d9d9"/><rect x="7" y="6" width="9" height="9" fill="#d9d9d9"/>
<rect x="30" y="3" width="8" height="8" fill="#d9d9d9"/><rect x="33.5" y="6.5" width="8" height="8" fill="#535353" stroke="#d9d9d9" stroke-width="1.2"/>
<rect x="55.5" y="2.5" width="8" height="8" fill="none" stroke="#d9d9d9" stroke-width="1.2"/><rect x="59.5" y="6.5" width="8" height="8" fill="none" stroke="#d9d9d9" stroke-width="1.2"/><rect x="59.5" y="6.5" width="4" height="4" fill="#d9d9d9"/>
</svg>
<div class="a" style="left:181px;top:31px;width:1px;height:24px;background:#3f3f3f"></div>
<div class="t" style="left:195px;top:37px;font-size:12px;color:#dedede">取样大小:</div>
<div class="a" style="left:253px;top:32px;width:110px;height:21px;background:#424242;border:1px solid #393939;border-radius:2px"></div>
<div class="t" style="left:262px;top:37px;font-size:12px;color:#f0f0f0">取样点</div>
<svg class="a" style="left:350px;top:39px" width="10" height="8"><path d="M1,2 L4.5,5.5 L8,2" stroke="#cfcfcf" fill="none" stroke-width="1"/></svg>
<div class="t" style="left:375px;top:37px;font-size:12px;color:#dedede">容差:</div>
<div class="a" style="left:410px;top:33px;width:43px;height:20px;background:#424242;border:1px solid #393939"></div>
<div class="t" style="left:412px;top:37px;font-size:12px;color:#f0f0f0">20</div>
<div class="a" style="left:461px;top:35px;width:13px;height:13px;background:#d6d6d6;border-radius:2px"></div>
<svg class="a" style="left:461px;top:35px" width="13" height="13"><path d="M3,6.5 L5.5,9 L10,3.5" stroke="#2a2a2a" stroke-width="1.8" fill="none"/></svg>
<div class="a" style="left:541px;top:35px;width:13px;height:13px;background:#d6d6d6;border-radius:2px"></div>
<svg class="a" style="left:541px;top:35px" width="13" height="13"><path d="M3,6.5 L5.5,9 L10,3.5" stroke="#2a2a2a" stroke-width="1.8" fill="none"/></svg>
<div class="a" style="left:596px;top:35px;width:13px;height:13px;background:#3c3c3c;border:1px solid #6a6a6a;border-radius:2px"></div>
<div class="t" style="left:481px;top:37px;font-size:12px;color:#dedede">消除锯齿</div>
<div class="t" style="left:560px;top:37px;font-size:12px;color:#dedede">连续</div>
<div class="t" style="left:615px;top:37px;font-size:12px;color:#dedede">对所有图层取样</div>
<div class="a" style="left:713px;top:31px;width:1px;height:24px;background:#3f3f3f"></div>
<div class="a" style="left:725px;top:32px;width:98px;height:21px;background:#454545;border:1px solid #3a3a3a;border-radius:3px"></div>
<div class="t" style="left:738px;top:37px;font-size:12px;color:#f0f0f0">选择并遮住 ...</div>
<svg class="a" style="left:1520px;top:33px" width="80" height="20">
<circle cx="14" cy="7" r="5" stroke="#d9d9d9" stroke-width="1.6" fill="none"/><path d="M10.5,10.5 L5.5,15.5" stroke="#d9d9d9" stroke-width="2"/>
<rect x="30" y="0" width="1" height="20" fill="#444"/>
<rect x="39" y="3.5" width="15" height="12" stroke="#d9d9d9" stroke-width="1.3" fill="none"/><path d="M43,6 v7 M41.5,7 h3 M41.5,9.5 h3 M41.5,12 h3" stroke="#d9d9d9" stroke-width="0.8"/>
<path d="M63,8 L66.5,11.5 L70,8" stroke="#cfcfcf" fill="none" stroke-width="1"/>
</svg>
<svg class="a" style="left:8px;top:62px" width="10" height="8"><path d="M1,1 L4,4 L1,7 M5,1 L8,4 L5,7" stroke="#c8c8c8" stroke-width="1.2" fill="none"/></svg>
<svg class="a" style="left:8px;top:75px" width="24" height="4"><rect x="0.0" y="0" width="1" height="4" fill="#3a3a3a"/><rect x="2.4" y="0" width="1" height="4" fill="#3a3a3a"/><rect x="4.8" y="0" width="1" height="4" fill="#3a3a3a"/><rect x="7.2" y="0" width="1" height="4" fill="#3a3a3a"/><rect x="9.6" y="0" width="1" height="4" fill="#3a3a3a"/><rect x="12.0" y="0" width="1" height="4" fill="#3a3a3a"/><rect x="14.4" y="0" width="1" height="4" fill="#3a3a3a"/><rect x="16.8" y="0" width="1" height="4" fill="#3a3a3a"/><rect x="19.2" y="0" width="1" height="4" fill="#3a3a3a"/><rect x="21.6" y="0" width="1" height="4" fill="#3a3a3a"/></svg>
<div class="a" style="left:4px;top:166px;width:31px;height:25px;background:#383838;border:1px solid #4e4e4e;border-radius:3px"></div>
<svg class="a" style="left:9px;top:90px" width="22" height="22"><path d="M10,2 v16 M2,10 h16" stroke="#d9d9d9" stroke-width="1.4"/><path d="M10,1 l-3,3 h6z M10,19 l-3,-3 h6z M1,10 l3,-3 v6z M19,10 l-3,-3 v6z" fill="#d9d9d9"/></svg>
<svg class="a" style="left:9px;top:116px" width="22" height="22"><rect x="3" y="4" width="14" height="11" fill="none" stroke="#d9d9d9" stroke-width="1.3" stroke-dasharray="2.2,1.6"/></svg>
<svg class="a" style="left:28px;top:132px" width="4" height="4"><path d="M4,0 V4 H0Z" fill="#c8c8c8"/></svg>
<svg class="a" style="left:9px;top:142px" width="22" height="22"><path d="M3,3 L17,6 L10,12 L6,17 Q4,12 8,11 Z" fill="none" stroke="#d9d9d9" stroke-width="1.3"/></svg>
<svg class="a" style="left:28px;top:158px" width="4" height="4"><path d="M4,0 V4 H0Z" fill="#c8c8c8"/></svg>
<svg class="a" style="left:9px;top:168px" width="22" height="22"><path d="M4,17 L12,9" stroke="#d9d9d9" stroke-width="3.2" stroke-linecap="round"/><path d="M11,3 l0.8,2 2,0.8 -2,0.8 -0.8,2 -0.8,-2 -2,-0.8 2,-0.8z M16,7 l0.7,1.7 1.7,0.7 -1.7,0.7 -0.7,1.7 -0.7,-1.7 -1.7,-0.7 1.7,-0.7z" fill="#d9d9d9"/></svg>
<svg class="a" style="left:28px;top:184px" width="4" height="4"><path d="M4,0 V4 H0Z" fill="#c8c8c8"/></svg>
<svg class="a" style="left:9px;top:194px" width="22" height="22"><path d="M6,2 v13 h12 M2,6 h13 v13" stroke="#d9d9d9" stroke-width="2" fill="none"/></svg>
<svg class="a" style="left:28px;top:210px" width="4" height="4"><path d="M4,0 V4 H0Z" fill="#c8c8c8"/></svg>
<svg class="a" style="left:9px;top:220px" width="22" height="22"><path d="M3,18 L12,9 M10,7 l4,4" stroke="#d9d9d9" stroke-width="2.2"/><circle cx="15" cy="5" r="3" fill="#d9d9d9"/></svg>
<svg class="a" style="left:28px;top:236px" width="4" height="4"><path d="M4,0 V4 H0Z" fill="#c8c8c8"/></svg>
<svg class="a" style="left:9px;top:246px" width="22" height="22"><rect x="4" y="5" width="12" height="10" rx="2" fill="none" stroke="#d9d9d9" stroke-width="1.8" stroke-dasharray="2,1"/></svg>
<svg class="a" style="left:28px;top:262px" width="4" height="4"><path d="M4,0 V4 H0Z" fill="#c8c8c8"/></svg>
<svg class="a" style="left:9px;top:272px" width="22" height="22"><path d="M3,18 Q4,13 8,13 L16,3 L17,4 L10,14 Q9,18 3,18Z" fill="#d9d9d9"/></svg>
<svg class="a" style="left:28px;top:288px" width="4" height="4"><path d="M4,0 V4 H0Z" fill="#c8c8c8"/></svg>
<svg class="a" style="left:9px;top:298px" width="22" height="22"><circle cx="10" cy="5" r="3" fill="#d9d9d9"/><path d="M8,8 h4 v3 h5 v3 h-14 v-3 h5z M3,16 h14 v1.5 h-14z" fill="#d9d9d9"/></svg>
<svg class="a" style="left:28px;top:314px" width="4" height="4"><path d="M4,0 V4 H0Z" fill="#c8c8c8"/></svg>
<svg class="a" style="left:9px;top:324px" width="22" height="22"><path d="M4,17 L13,8 L16,4 L15,10 L6,18Z" fill="#d9d9d9"/><path d="M2,8 Q5,4 9,5" stroke="#d9d9d9" fill="none" stroke-width="1.2"/></svg>
<svg class="a" style="left:28px;top:340px" width="4" height="4"><path d="M4,0 V4 H0Z" fill="#c8c8c8"/></svg>
<svg class="a" style="left:9px;top:350px" width="22" height="22"><path d="M3,14 L11,5 L17,10 L10,17 H5 Z" fill="none" stroke="#d9d9d9" stroke-width="1.4"/><path d="M3,14 L7,10 L12,15 L10,17 H5Z" fill="#d9d9d9"/></svg>
<svg class="a" style="left:28px;top:366px" width="4" height="4"><path d="M4,0 V4 H0Z" fill="#c8c8c8"/></svg>
<svg class="a" style="left:9px;top:376px" width="22" height="22"><defs><linearGradient id="gg"><stop offset="0" stop-color="#fff"/><stop offset="1" stop-color="#222"/></linearGradient></defs><rect x="3" y="3" width="14" height="14" fill="url(#gg)" stroke="#d9d9d9" stroke-width="1"/></svg>
<svg class="a" style="left:28px;top:392px" width="4" height="4"><path d="M4,0 V4 H0Z" fill="#c8c8c8"/></svg>
<svg class="a" style="left:9px;top:403px" width="22" height="22"><path d="M10,3 Q16,11 15,14 A5,5 0 0 1 5,14 Q4,11 10,3Z" fill="#d9d9d9"/></svg>
<svg class="a" style="left:28px;top:419px" width="4" height="4"><path d="M4,0 V4 H0Z" fill="#c8c8c8"/></svg>
<svg class="a" style="left:9px;top:429px" width="22" height="22"><circle cx="12" cy="7" r="5" fill="#d9d9d9"/><path d="M9,10 L3,16" stroke="#d9d9d9" stroke-width="1.5"/></svg>
<svg class="a" style="left:28px;top:445px" width="4" height="4"><path d="M4,0 V4 H0Z" fill="#c8c8c8"/></svg>
<svg class="a" style="left:9px;top:455px" width="22" height="22"><path d="M4,3 h12 v4 h-1.5 l-1,-2 h-2.5 v11 l2,1 v1 h-6 v-1 l2,-1 v-11 h-2.5 l-1,2 h-1.5z" fill="#d9d9d9"/></svg>
<svg class="a" style="left:28px;top:471px" width="4" height="4"><path d="M4,0 V4 H0Z" fill="#c8c8c8"/></svg>
<svg class="a" style="left:9px;top:481px" width="22" height="22"><path d="M4,17 L6,10 L12,4 L16,8 L10,14 Z" fill="none" stroke="#d9d9d9" stroke-width="1.5"/><circle cx="9" cy="11" r="1.3" fill="#d9d9d9"/></svg>
<svg class="a" style="left:28px;top:497px" width="4" height="4"><path d="M4,0 V4 H0Z" fill="#c8c8c8"/></svg>
<svg class="a" style="left:9px;top:507px" width="22" height="22"><path d="M6,3 L6,17 L9,13.5 L12,19 L14,18 L11,12.5 L16,12.5 Z" fill="#d9d9d9"/></svg>
<svg class="a" style="left:28px;top:523px" width="4" height="4"><path d="M4,0 V4 H0Z" fill="#c8c8c8"/></svg>
<svg class="a" style="left:9px;top:532px" width="22" height="22"><rect x="3" y="4" width="15" height="12" fill="#9a9a9a" stroke="#d9d9d9" stroke-width="1.2"/></svg>
<svg class="a" style="left:28px;top:548px" width="4" height="4"><path d="M4,0 V4 H0Z" fill="#c8c8c8"/></svg>
<svg class="a" style="left:9px;top:559px" width="22" height="22"><path d="M6,18 Q3,14 3,10 V7 Q4,6 5,7 V11 V4 Q6,3 7,4 V10 V3 Q8,2 9,3 V10 V4 Q10,3 11,4 V11 V7 Q12,6 13,7 V12 Q15,10 16,11 Q14,15 12,18 Z" fill="#d9d9d9"/></svg>
<svg class="a" style="left:28px;top:575px" width="4" height="4"><path d="M4,0 V4 H0Z" fill="#c8c8c8"/></svg>
<svg class="a" style="left:9px;top:584px" width="22" height="22"><circle cx="9" cy="8" r="5.5" fill="none" stroke="#d9d9d9" stroke-width="1.6"/><path d="M13,12 L17,16" stroke="#d9d9d9" stroke-width="2"/></svg>
<svg class="a" style="left:28px;top:600px" width="4" height="4"><path d="M4,0 V4 H0Z" fill="#c8c8c8"/></svg>
<svg class="a" style="left:9px;top:610px" width="22" height="22"><circle cx="4" cy="10" r="1.6" fill="#d9d9d9"/><circle cx="10" cy="10" r="1.6" fill="#d9d9d9"/><circle cx="16" cy="10" r="1.6" fill="#d9d9d9"/></svg>
<svg class="a" style="left:4px;top:637px" width="34" height="12"><rect x="1" y="1" width="6" height="6" fill="#1a1a1a" stroke="#ddd" stroke-width="0.8"/><rect x="4" y="4" width="6" height="6" fill="#fff" stroke="#333" stroke-width="0.6"/><path d="M22,3 h6 v6 M25,0 l-3,3 3,3 M31,6 l-3,3 -3,-3" stroke="#ddd" fill="none" stroke-width="1"/></svg>
<div class="a" style="left:15px;top:664px;width:18px;height:18px;background:#000;border:1px solid #e0e0e0"></div>
<div class="a" style="left:5px;top:656px;width:18px;height:18px;background:#fce7a9;border:1px solid #e0e0e0"></div>
<svg class="a" style="left:9px;top:694px" width="22" height="16"><rect x="2" y="2" width="16" height="12" fill="none" stroke="#d9d9d9" stroke-width="1.3"/><circle cx="10" cy="8" r="3.5" fill="none" stroke="#d9d9d9" stroke-width="1" stroke-dasharray="1.5,1"/></svg>
<svg class="a" style="left:9px;top:720px" width="24" height="18"><rect x="2" y="5" width="13" height="9" fill="#535353" stroke="#d9d9d9" stroke-width="1.3"/><rect x="6" y="2" width="13" height="9" fill="#535353" stroke="#d9d9d9" stroke-width="1.3"/><path d="M23,14 V18 H19Z" fill="#c8c8c8"/></svg>
<div class="a" style="left:25px;top:0;width:10px;height:1px;background:#00e60f"></div>
<div class="a" style="left:25px;top:899px;width:10px;height:1px;background:#00e60f"></div>
<div class="a" style="left:50px;top:0;width:10px;height:1px;background:#00e60f"></div>
<div class="a" style="left:50px;top:899px;width:10px;height:1px;background:#00e60f"></div>
<div class="a" style="left:75px;top:0;width:10px;height:1px;background:#00e60f"></div>
<div class="a" style="left:75px;top:899px;width:10px;height:1px;background:#00e60f"></div>
<div class="a" style="left:100px;top:0;width:10px;height:1px;background:#00e60f"></div>
<div class="a" style="left:100px;top:899px;width:10px;height:1px;background:#00e60f"></div>
<div class="a" style="left:125px;top:0;width:10px;height:1px;background:#00e60f"></div>
<div class="a" style="left:125px;top:899px;width:10px;height:1px;background:#00e60f"></div>
<div class="a" style="left:150px;top:0;width:10px;height:1px;background:#00e60f"></div>
<div class="a" style="left:150px;top:899px;width:10px;height:1px;background:#00e60f"></div>
<div class="a" style="left:175px;top:0;width:10px;height:1px;background:#00e60f"></div>
<div class="a" style="left:175px;top:899px;width:10px;height:1px;background:#00e60f"></div>
<div class="a" style="left:200px;top:0;width:10px;height:1px;background:#00e60f"></div>
<div class="a" style="left:200px;top:899px;width:10px;height:1px;background:#00e60f"></div>
<div class="a" style="left:225px;top:0;width:10px;height:1px;background:#00e60f"></div>
<div class="a" style="left:225px;top:899px;width:10px;height:1px;background:#00e60f"></div>
<div class="a" style="left:250px;top:0;width:10px;height:1px;background:#00e60f"></div>
<div class="a" style="left:250px;top:899px;width:10px;height:1px;background:#00e60f"></div>
<div class="a" style="left:275px;top:0;width:10px;height:1px;background:#00e60f"></div>
<div class="a" style="left:275px;top:899px;width:10px;height:1px;background:#00e60f"></div>
<div class="a" style="left:300px;top:0;width:10px;height:1px;background:#00e60f"></div>
<div class="a" style="left:300px;top:899px;width:10px;height:1px;background:#00e60f"></div>
<div class="a" style="left:325px;top:0;width:10px;height:1px;background:#00e60f"></div>
<div class="a" style="left:325px;top:899px;width:10px;height:1px;background:#00e60f"></div>
<div class="a" style="left:350px;top:0;width:10px;height:1px;background:#00e60f"></div>
<div class="a" style="left:350px;top:899px;width:10px;height:1px;background:#00e60f"></div>
<div class="a" style="left:375px;top:0;width:10px;height:1px;background:#00e60f"></div>
<div class="a" style="left:375px;top:899px;width:10px;height:1px;background:#00e60f"></div>
<div class="a" style="left:400px;top:0;width:10px;height:1px;background:#00e60f"></div>
<div class="a" style="left:400px;top:899px;width:10px;height:1px;background:#00e60f"></div>
<div class="a" style="left:425px;top:0;width:10px;height:1px;background:#00e60f"></div>
<div class="a" style="left:425px;top:899px;width:10px;height:1px;background:#00e60f"></div>
<div class="a" style="left:450px;top:0;width:10px;height:1px;background:#00e60f"></div>
<div class="a" style="left:450px;top:899px;width:10px;height:1px;background:#00e60f"></div>
<div class="a" style="left:475px;top:0;width:10px;height:1px;background:#00e60f"></div>
<div class="a" style="left:475px;top:899px;width:10px;height:1px;background:#00e60f"></div>
<div class="a" style="left:500px;top:0;width:10px;height:1px;background:#00e60f"></div>
<div class="a" style="left:500px;top:899px;width:10px;height:1px;background:#00e60f"></div>
<div class="a" style="left:525px;top:0;width:10px;height:1px;background:#00e60f"></div>
<div class="a" style="left:525px;top:899px;width:10px;height:1px;background:#00e60f"></div>
<div class="a" style="left:550px;top:0;width:10px;height:1px;background:#00e60f"></div>
<div class="a" style="left:550px;top:899px;width:10px;height:1px;background:#00e60f"></div>
<div class="a" style="left:575px;top:0;width:10px;height:1px;background:#00e60f"></div>
<div class="a" style="left:575px;top:899px;width:10px;height:1px;background:#00e60f"></div>
<div class="a" style="left:600px;top:0;width:10px;height:1px;background:#00e60f"></div>
<div class="a" style="left:600px;top:899px;width:10px;height:1px;background:#00e60f"></div>
<div class="a" style="left:625px;top:0;width:10px;height:1px;background:#00e60f"></div>
<div class="a" style="left:625px;top:899px;width:10px;height:1px;background:#00e60f"></div>
<div class="a" style="left:650px;top:0;width:10px;height:1px;background:#00e60f"></div>
<div class="a" style="left:650px;top:899px;width:10px;height:1px;background:#00e60f"></div>
<div class="a" style="left:675px;top:0;width:10px;height:1px;background:#00e60f"></div>
<div class="a" style="left:675px;top:899px;width:10px;height:1px;background:#00e60f"></div>
<div class="a" style="left:700px;top:0;width:10px;height:1px;background:#00e60f"></div>
<div class="a" style="left:700px;top:899px;width:10px;height:1px;background:#00e60f"></div>
<div class="a" style="left:725px;top:0;width:10px;height:1px;background:#00e60f"></div>
<div class="a" style="left:725px;top:899px;width:10px;height:1px;background:#00e60f"></div>
<div class="a" style="left:750px;top:0;width:10px;height:1px;background:#00e60f"></div>
<div class="a" style="left:750px;top:899px;width:10px;height:1px;background:#00e60f"></div>
<div class="a" style="left:775px;top:0;width:10px;height:1px;background:#00e60f"></div>
<div class="a" style="left:775px;top:899px;width:10px;height:1px;background:#00e60f"></div>
<div class="a" style="left:800px;top:0;width:10px;height:1px;background:#00e60f"></div>
<div class="a" style="left:800px;top:899px;width:10px;height:1px;background:#00e60f"></div>
<div class="a" style="left:825px;top:0;width:10px;height:1px;background:#00e60f"></div>
<div class="a" style="left:825px;top:899px;width:10px;height:1px;background:#00e60f"></div>
<div class="a" style="left:850px;top:0;width:10px;height:1px;background:#00e60f"></div>
<div class="a" style="left:850px;top:899px;width:10px;height:1px;background:#00e60f"></div>
<div class="a" style="left:875px;top:0;width:10px;height:1px;background:#00e60f"></div>
<div class="a" style="left:875px;top:899px;width:10px;height:1px;background:#00e60f"></div>
<div class="a" style="left:900px;top:0;width:10px;height:1px;background:#00e60f"></div>
<div class="a" style="left:900px;top:899px;width:10px;height:1px;background:#00e60f"></div>
<div class="a" style="left:925px;top:0;width:10px;height:1px;background:#00e60f"></div>
<div class="a" style="left:925px;top:899px;width:10px;height:1px;background:#00e60f"></div>
<div class="a" style="left:950px;top:0;width:10px;height:1px;background:#00e60f"></div>
<div class="a" style="left:950px;top:899px;width:10px;height:1px;background:#00e60f"></div>
<div class="a" style="left:975px;top:0;width:10px;height:1px;background:#00e60f"></div>
<div class="a" style="left:975px;top:899px;width:10px;height:1px;background:#00e60f"></div>
<div class="a" style="left:1000px;top:0;width:10px;height:1px;background:#00e60f"></div>
<div class="a" style="left:1000px;top:899px;width:10px;height:1px;background:#00e60f"></div>
<div class="a" style="left:1025px;top:0;width:10px;height:1px;background:#00e60f"></div>
<div class="a" style="left:1025px;top:899px;width:10px;height:1px;background:#00e60f"></div>
<div class="a" style="left:1050px;top:0;width:10px;height:1px;background:#00e60f"></div>
<div class="a" style="left:1050px;top:899px;width:10px;height:1px;background:#00e60f"></div>
<div class="a" style="left:1075px;top:0;width:10px;height:1px;background:#00e60f"></div>
<div class="a" style="left:1075px;top:899px;width:10px;height:1px;background:#00e60f"></div>
<div class="a" style="left:1100px;top:0;width:10px;height:1px;background:#00e60f"></div>
<div class="a" style="left:1100px;top:899px;width:10px;height:1px;background:#00e60f"></div>
<div class="a" style="left:1125px;top:0;width:10px;height:1px;background:#00e60f"></div>
<div class="a" style="left:1125px;top:899px;width:10px;height:1px;background:#00e60f"></div>
<div class="a" style="left:1150px;top:0;width:10px;height:1px;background:#00e60f"></div>
<div class="a" style="left:1150px;top:899px;width:10px;height:1px;background:#00e60f"></div>
<div class="a" style="left:1175px;top:0;width:10px;height:1px;background:#00e60f"></div>
<div class="a" style="left:1175px;top:899px;width:10px;height:1px;background:#00e60f"></div>
<div class="a" style="left:1200px;top:0;width:10px;height:1px;background:#00e60f"></div>
<div class="a" style="left:1200px;top:899px;width:10px;height:1px;background:#00e60f"></div>
<div class="a" style="left:1225px;top:0;width:10px;height:1px;background:#00e60f"></div>
<div class="a" style="left:1225px;top:899px;width:10px;height:1px;background:#00e60f"></div>
<div class="a" style="left:1250px;top:0;width:10px;height:1px;background:#00e60f"></div>
<div class="a" style="left:1250px;top:899px;width:10px;height:1px;background:#00e60f"></div>
<div class="a" style="left:1275px;top:0;width:10px;height:1px;background:#00e60f"></div>
<div class="a" style="left:1275px;top:899px;width:10px;height:1px;background:#00e60f"></div>
<div class="a" style="left:1300px;top:0;width:10px;height:1px;background:#00e60f"></div>
<div class="a" style="left:1300px;top:899px;width:10px;height:1px;background:#00e60f"></div>
<div class="a" style="left:1325px;top:0;width:10px;height:1px;background:#00e60f"></div>
<div class="a" style="left:1325px;top:899px;width:10px;height:1px;background:#00e60f"></div>
<div class="a" style="left:1350px;top:0;width:10px;height:1px;background:#00e60f"></div>
<div class="a" style="left:1350px;top:899px;width:10px;height:1px;background:#00e60f"></div>
<div class="a" style="left:1375px;top:0;width:10px;height:1px;background:#00e60f"></div>
<div class="a" style="left:1375px;top:899px;width:10px;height:1px;background:#00e60f"></div>
<div class="a" style="left:1400px;top:0;width:10px;height:1px;background:#00e60f"></div>
<div class="a" style="left:1400px;top:899px;width:10px;height:1px;background:#00e60f"></div>
<div class="a" style="left:1425px;top:0;width:10px;height:1px;background:#00e60f"></div>
<div class="a" style="left:1425px;top:899px;width:10px;height:1px;background:#00e60f"></div>
<div class="a" style="left:1450px;top:0;width:10px;height:1px;background:#00e60f"></div>
<div class="a" style="left:1450px;top:899px;width:10px;height:1px;background:#00e60f"></div>
<div class="a" style="left:1475px;top:0;width:10px;height:1px;background:#00e60f"></div>
<div class="a" style="left:1475px;top:899px;width:10px;height:1px;background:#00e60f"></div>
<div class="a" style="left:1500px;top:0;width:10px;height:1px;background:#00e60f"></div>
<div class="a" style="left:1500px;top:899px;width:10px;height:1px;background:#00e60f"></div>
<div class="a" style="left:1525px;top:0;width:10px;height:1px;background:#00e60f"></div>
<div class="a" style="left:1525px;top:899px;width:10px;height:1px;background:#00e60f"></div>
<div class="a" style="left:1550px;top:0;width:10px;height:1px;background:#00e60f"></div>
<div class="a" style="left:1550px;top:899px;width:10px;height:1px;background:#00e60f"></div>
<div class="a" style="left:1575px;top:0;width:10px;height:1px;background:#00e60f"></div>
<div class="a" style="left:1575px;top:899px;width:10px;height:1px;background:#00e60f"></div>
<div class="a" style="left:0;top:25px;width:1px;height:10px;background:#00e60f"></div>
<div class="a" style="left:1599px;top:25px;width:1px;height:10px;background:#00e60f"></div>
<div class="a" style="left:0;top:50px;width:1px;height:10px;background:#00e60f"></div>
<div class="a" style="left:1599px;top:50px;width:1px;height:10px;background:#00e60f"></div>
<div class="a" style="left:0;top:75px;width:1px;height:10px;background:#00e60f"></div>
<div class="a" style="left:1599px;top:75px;width:1px;height:10px;background:#00e60f"></div>
<div class="a" style="left:0;top:100px;width:1px;height:10px;background:#00e60f"></div>
<div class="a" style="left:1599px;top:100px;width:1px;height:10px;background:#00e60f"></div>
<div class="a" style="left:0;top:125px;width:1px;height:10px;background:#00e60f"></div>
<div class="a" style="left:1599px;top:125px;width:1px;height:10px;background:#00e60f"></div>
<div class="a" style="left:0;top:150px;width:1px;height:10px;background:#00e60f"></div>
<div class="a" style="left:1599px;top:150px;width:1px;height:10px;background:#00e60f"></div>
<div class="a" style="left:0;top:175px;width:1px;height:10px;background:#00e60f"></div>
<div class="a" style="left:1599px;top:175px;width:1px;height:10px;background:#00e60f"></div>
<div class="a" style="left:0;top:200px;width:1px;height:10px;background:#00e60f"></div>
<div class="a" style="left:1599px;top:200px;width:1px;height:10px;background:#00e60f"></div>
<div class="a" style="left:0;top:225px;width:1px;height:10px;background:#00e60f"></div>
<div class="a" style="left:1599px;top:225px;width:1px;height:10px;background:#00e60f"></div>
<div class="a" style="left:0;top:250px;width:1px;height:10px;background:#00e60f"></div>
<div class="a" style="left:1599px;top:250px;width:1px;height:10px;background:#00e60f"></div>
<div class="a" style="left:0;top:275px;width:1px;height:10px;background:#00e60f"></div>
<div class="a" style="left:1599px;top:275px;width:1px;height:10px;background:#00e60f"></div>
<div class="a" style="left:0;top:300px;width:1px;height:10px;background:#00e60f"></div>
<div class="a" style="left:1599px;top:300px;width:1px;height:10px;background:#00e60f"></div>
<div class="a" style="left:0;top:325px;width:1px;height:10px;background:#00e60f"></div>
<div class="a" style="left:1599px;top:325px;width:1px;height:10px;background:#00e60f"></div>
<div class="a" style="left:0;top:350px;width:1px;height:10px;background:#00e60f"></div>
<div class="a" style="left:1599px;top:350px;width:1px;height:10px;background:#00e60f"></div>
<div class="a" style="left:0;top:375px;width:1px;height:10px;background:#00e60f"></div>
<div class="a" style="left:1599px;top:375px;width:1px;height:10px;background:#00e60f"></div>
<div class="a" style="left:0;top:400px;width:1px;height:10px;background:#00e60f"></div>
<div class="a" style="left:1599px;top:400px;width:1px;height:10px;background:#00e60f"></div>
<div class="a" style="left:0;top:425px;width:1px;height:10px;background:#00e60f"></div>
<div class="a" style="left:1599px;top:425px;width:1px;height:10px;background:#00e60f"></div>
<div class="a" style="left:0;top:450px;width:1px;height:10px;background:#00e60f"></div>
<div class="a" style="left:1599px;top:450px;width:1px;height:10px;background:#00e60f"></div>
<div class="a" style="left:0;top:475px;width:1px;height:10px;background:#00e60f"></div>
<div class="a" style="left:1599px;top:475px;width:1px;height:10px;background:#00e60f"></div>
<div class="a" style="left:0;top:500px;width:1px;height:10px;background:#00e60f"></div>
<div class="a" style="left:1599px;top:500px;width:1px;height:10px;background:#00e60f"></div>
<div class="a" style="left:0;top:525px;width:1px;height:10px;background:#00e60f"></div>
<div class="a" style="left:1599px;top:525px;width:1px;height:10px;background:#00e60f"></div>
<div class="a" style="left:0;top:550px;width:1px;height:10px;background:#00e60f"></div>
<div class="a" style="left:1599px;top:550px;width:1px;height:10px;background:#00e60f"></div>
<div class="a" style="left:0;top:575px;width:1px;height:10px;background:#00e60f"></div>
<div class="a" style="left:1599px;top:575px;width:1px;height:10px;background:#00e60f"></div>
<div class="a" style="left:0;top:600px;width:1px;height:10px;background:#00e60f"></div>
<div class="a" style="left:1599px;top:600px;width:1px;height:10px;background:#00e60f"></div>
<div class="a" style="left:0;top:625px;width:1px;height:10px;background:#00e60f"></div>
<div class="a" style="left:1599px;top:625px;width:1px;height:10px;background:#00e60f"></div>
<div class="a" style="left:0;top:650px;width:1px;height:10px;background:#00e60f"></div>
<div class="a" style="left:1599px;top:650px;width:1px;height:10px;background:#00e60f"></div>
<div class="a" style="left:0;top:675px;width:1px;height:10px;background:#00e60f"></div>
<div class="a" style="left:1599px;top:675px;width:1px;height:10px;background:#00e60f"></div>
<div class="a" style="left:0;top:700px;width:1px;height:10px;background:#00e60f"></div>
<div class="a" style="left:1599px;top:700px;width:1px;height:10px;background:#00e60f"></div>
<div class="a" style="left:0;top:725px;width:1px;height:10px;background:#00e60f"></div>
<div class="a" style="left:1599px;top:725px;width:1px;height:10px;background:#00e60f"></div>
<div class="a" style="left:0;top:750px;width:1px;height:10px;background:#00e60f"></div>
<div class="a" style="left:1599px;top:750px;width:1px;height:10px;background:#00e60f"></div>
<div class="a" style="left:0;top:775px;width:1px;height:10px;background:#00e60f"></div>
<div class="a" style="left:1599px;top:775px;width:1px;height:10px;background:#00e60f"></div>
<div class="a" style="left:0;top:800px;width:1px;height:10px;background:#00e60f"></div>
<div class="a" style="left:1599px;top:800px;width:1px;height:10px;background:#00e60f"></div>
<div class="a" style="left:0;top:825px;width:1px;height:10px;background:#00e60f"></div>
<div class="a" style="left:1599px;top:825px;width:1px;height:10px;background:#00e60f"></div>
<div class="a" style="left:0;top:850px;width:1px;height:10px;background:#00e60f"></div>
<div class="a" style="left:1599px;top:850px;width:1px;height:10px;background:#00e60f"></div>
<div class="a" style="left:0;top:875px;width:1px;height:10px;background:#00e60f"></div>
<div class="a" style="left:1599px;top:875px;width:1px;height:10px;background:#00e60f"></div>
<div class="a" style="left:0px;top:0px;width:10px;height:10px;background:#e0e0e0;border:1px solid #000"></div>
<div class="a" style="left:795px;top:0px;width:10px;height:10px;background:#e0e0e0;border:1px solid #000"></div>
<div class="a" style="left:1590px;top:0px;width:10px;height:10px;background:#e0e0e0;border:1px solid #000"></div>
<div class="a" style="left:0px;top:445px;width:10px;height:10px;background:#e0e0e0;border:1px solid #000"></div>
<div class="a" style="left:1590px;top:445px;width:10px;height:10px;background:#e0e0e0;border:1px solid #000"></div>
<div class="a" style="left:0px;top:890px;width:10px;height:10px;background:#e0e0e0;border:1px solid #000"></div>
<div class="a" style="left:795px;top:890px;width:10px;height:10px;background:#e0e0e0;border:1px solid #000"></div>
<div class="a" style="left:1590px;top:890px;width:10px;height:10px;background:#e0e0e0;border:1px solid #000"></div>
</body></html>
